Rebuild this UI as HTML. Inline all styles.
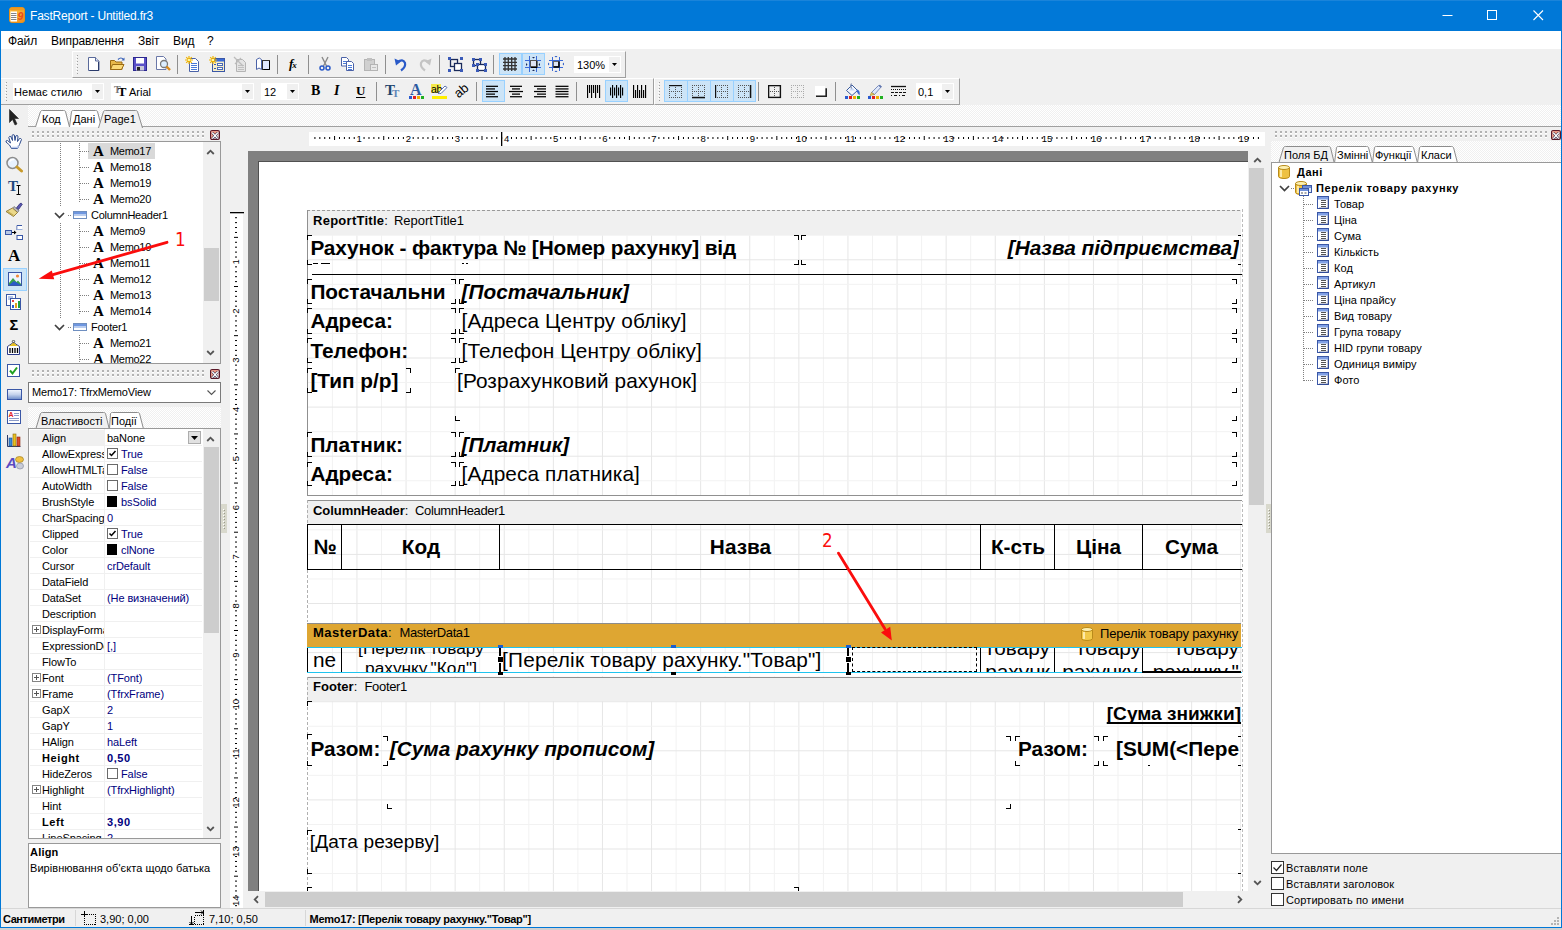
<!DOCTYPE html>
<html lang="uk"><head><meta charset="utf-8"><title>FastReport - Untitled.fr3</title>
<style>
html,body{margin:0;padding:0;}
body{width:1562px;height:930px;position:relative;overflow:hidden;background:#f0f0f0;font-family:"Liberation Sans",sans-serif;font-size:11px;color:#000;}
div,svg{position:absolute;box-sizing:border-box;}
.t{white-space:nowrap;font-size:11px;}
.b{font-weight:bold;letter-spacing:0.55px;}
.nv{color:#000080;}
.dot{background-image:linear-gradient(45deg,#fff 25%,transparent 25%,transparent 75%,#fff 75%),linear-gradient(45deg,#fff 25%,transparent 25%,transparent 75%,#fff 75%);background-size:2px 2px;background-position:0 0,1px 1px;background-color:#f0f0f0;}
.rt{white-space:nowrap;font-family:"Liberation Sans",sans-serif;color:#000;}
.act{background:#cce4f7;border:1px solid #99d1ff;}
.sep{width:1px;background:#a0a0a0;}
.combo{background:#fff;}
</style></head>
<body>
<div style="left:0px;top:0px;width:1562px;height:31px;background:#0078d7;"></div>
<div style="left:0px;top:0px;width:1562px;height:1px;background:#1a84da;"></div>
<div style="left:0px;top:31px;width:1px;height:897px;background:#0078d7;"></div>
<div style="left:1561px;top:31px;width:1px;height:897px;background:#0078d7;"></div>
<div style="left:0px;top:927px;width:1562px;height:1.4px;background:#0078d7;"></div>
<div style="left:0px;top:928.4px;width:1562px;height:1.6px;background:#d2d0d0;"></div>
<svg style="left:9px;top:7px;" width="16" height="16" viewBox="0 0 16 16"><defs><linearGradient id="ig" x1="0" y1="0" x2="1" y2="1"><stop offset="0" stop-color="#ffd24a"/><stop offset="1" stop-color="#f08a1a"/></linearGradient></defs>
<rect x="0.500" y="0.500" width="15" height="15" rx="2.500" fill="url(#ig)" stroke="#e8901a"/>
<rect x="1" y="1" width="14" height="2.500" rx="1.200" fill="#f09a20"/>
<rect x="1.500" y="4.500" width="6.500" height="10" fill="#fff"/>
<path d="M2 6.500h5.500M2 8.500h5.500M2 10.500h5.500M2 12.500h5.500" stroke="#777" stroke-width="0.900"/>
<text x="8.600" y="13" font-family="Liberation Sans" font-style="italic" font-weight="bold" font-size="10.500" fill="#ee4a1c">9</text></svg>
<div class="t" style="left:30px;top:7px;height:18px;line-height:18px;color:#fff;font-size:12px;letter-spacing:-0.2px;">FastReport - Untitled.fr3</div>
<svg style="left:1440px;top:8px;" width="110" height="16" viewBox="0 0 110 16"><path d="M2.5 7.5h10" stroke="#fff" stroke-width="1"/>
<rect x="47.5" y="2.5" width="9" height="9" fill="none" stroke="#fff" stroke-width="1"/>
<path d="M93.5 2.5l9.5 9.5M103 2.5l-9.5 9.5" stroke="#fff" stroke-width="1.1"/></svg>
<div style="left:1px;top:31px;width:1560px;height:18px;background:#fff;"></div>
<div class="t" style="left:8px;top:32px;height:19px;line-height:19px;font-size:12px;letter-spacing:-0.1px;">Файл</div>
<div class="t" style="left:51px;top:32px;height:19px;line-height:19px;font-size:12px;letter-spacing:-0.1px;">Виправлення</div>
<div class="t" style="left:138px;top:32px;height:19px;line-height:19px;font-size:12px;letter-spacing:-0.1px;">Звіт</div>
<div class="t" style="left:173px;top:32px;height:19px;line-height:19px;font-size:12px;letter-spacing:-0.1px;">Вид</div>
<div class="t" style="left:207px;top:32px;height:19px;line-height:19px;font-size:12px;letter-spacing:-0.1px;">?</div>
<div style="left:1px;top:49px;width:1560px;height:56px;background:#f0f0f0;"></div>
<div style="left:72px;top:51px;width:554px;height:27px;border-left:1px solid #fff;border-top:1px solid #fff;border-right:1px solid #a0a0a0;border-bottom:1px solid #a0a0a0;"></div>
<div style="left:1px;top:78px;width:653px;height:27px;border-top:1px solid #fff;border-right:1px solid #a0a0a0;border-bottom:1px solid #a0a0a0;"></div>
<div style="left:654px;top:78px;width:306px;height:27px;border-left:1px solid #fff;border-top:1px solid #fff;border-right:1px solid #a0a0a0;border-bottom:1px solid #a0a0a0;"></div>
<svg style="left:76px;top:55px;" width="3" height="19" viewBox="0 0 3 19"><rect x="1" y="0" width="1" height="1" fill="#a0a0a0"/><rect x="0" y="1" width="1" height="1" fill="#fff"/><rect x="1" y="3" width="1" height="1" fill="#a0a0a0"/><rect x="0" y="4" width="1" height="1" fill="#fff"/><rect x="1" y="6" width="1" height="1" fill="#a0a0a0"/><rect x="0" y="7" width="1" height="1" fill="#fff"/><rect x="1" y="9" width="1" height="1" fill="#a0a0a0"/><rect x="0" y="10" width="1" height="1" fill="#fff"/><rect x="1" y="12" width="1" height="1" fill="#a0a0a0"/><rect x="0" y="13" width="1" height="1" fill="#fff"/><rect x="1" y="15" width="1" height="1" fill="#a0a0a0"/><rect x="0" y="16" width="1" height="1" fill="#fff"/><rect x="1" y="18" width="1" height="1" fill="#a0a0a0"/><rect x="0" y="19" width="1" height="1" fill="#fff"/></svg>
<svg style="left:5px;top:82px;" width="3" height="19" viewBox="0 0 3 19"><rect x="1" y="0" width="1" height="1" fill="#a0a0a0"/><rect x="0" y="1" width="1" height="1" fill="#fff"/><rect x="1" y="3" width="1" height="1" fill="#a0a0a0"/><rect x="0" y="4" width="1" height="1" fill="#fff"/><rect x="1" y="6" width="1" height="1" fill="#a0a0a0"/><rect x="0" y="7" width="1" height="1" fill="#fff"/><rect x="1" y="9" width="1" height="1" fill="#a0a0a0"/><rect x="0" y="10" width="1" height="1" fill="#fff"/><rect x="1" y="12" width="1" height="1" fill="#a0a0a0"/><rect x="0" y="13" width="1" height="1" fill="#fff"/><rect x="1" y="15" width="1" height="1" fill="#a0a0a0"/><rect x="0" y="16" width="1" height="1" fill="#fff"/><rect x="1" y="18" width="1" height="1" fill="#a0a0a0"/><rect x="0" y="19" width="1" height="1" fill="#fff"/></svg>
<svg style="left:658px;top:82px;" width="3" height="19" viewBox="0 0 3 19"><rect x="1" y="0" width="1" height="1" fill="#a0a0a0"/><rect x="0" y="1" width="1" height="1" fill="#fff"/><rect x="1" y="3" width="1" height="1" fill="#a0a0a0"/><rect x="0" y="4" width="1" height="1" fill="#fff"/><rect x="1" y="6" width="1" height="1" fill="#a0a0a0"/><rect x="0" y="7" width="1" height="1" fill="#fff"/><rect x="1" y="9" width="1" height="1" fill="#a0a0a0"/><rect x="0" y="10" width="1" height="1" fill="#fff"/><rect x="1" y="12" width="1" height="1" fill="#a0a0a0"/><rect x="0" y="13" width="1" height="1" fill="#fff"/><rect x="1" y="15" width="1" height="1" fill="#a0a0a0"/><rect x="0" y="16" width="1" height="1" fill="#fff"/><rect x="1" y="18" width="1" height="1" fill="#a0a0a0"/><rect x="0" y="19" width="1" height="1" fill="#fff"/></svg>
<div class="dot" style="left:28px;top:105px;width:1533px;height:21px;"></div>
<div style="left:28px;top:126px;width:1533px;height:1px;background:#a0a0a0;"></div>
<div style="left:1px;top:908px;width:1560px;height:1px;background:#d7d7d7;"></div>
<div class="t" style="left:3px;top:910px;height:18px;line-height:18px;letter-spacing:-0.45px;font-weight:bold;font-size:11px;">Сантиметри</div>
<div class="t" style="left:100px;top:910px;height:18px;line-height:18px;">3,90; 0,00</div>
<div class="t" style="left:209px;top:910px;height:18px;line-height:18px;">7,10; 0,50</div>
<div class="t" style="left:309.5px;top:910px;height:18px;line-height:18px;letter-spacing:-0.27px;font-weight:bold;font-size:11px;">Memo17: [Перелік товару рахунку."Товар"]</div>
<div style="left:75px;top:910px;width:1px;height:16px;background:#d7d7d7;"></div>
<div style="left:305px;top:910px;width:1px;height:16px;background:#d7d7d7;"></div>
<svg style="left:81px;top:911px;" width="16" height="15" viewBox="0 0 16 15"><g shape-rendering="crispEdges"><path d="M0 3.500h6M3.500 0v6" stroke="#000" fill="none"/><rect x="3.500" y="3.500" width="11" height="10" fill="none" stroke="#000" stroke-dasharray="1 1"/></g></svg>
<svg style="left:189px;top:910px;" width="16" height="16" viewBox="0 0 16 16"><g shape-rendering="crispEdges"><rect x="5.500" y="5.500" width="9" height="9" fill="none" stroke="#000" stroke-dasharray="1 1"/><path d="M6 2.500h9M2.500 6v9M0 14.500h5M14.500 0v5" stroke="#000" fill="none"/></g><path d="M12 0.500l2 2-2 2M0.500 12l2 2 2-2" stroke="#000" fill="none"/></svg>
<svg style="left:1549px;top:915px;" width="12" height="12" viewBox="0 0 12 12"><rect x="8" y="2" width="2" height="2" fill="#b4b4b4"/><rect x="5" y="5" width="2" height="2" fill="#b4b4b4"/><rect x="8" y="5" width="2" height="2" fill="#b4b4b4"/><rect x="2" y="8" width="2" height="2" fill="#b4b4b4"/><rect x="5" y="8" width="2" height="2" fill="#b4b4b4"/><rect x="8" y="8" width="2" height="2" fill="#b4b4b4"/></svg>
<div style="left:1px;top:105px;width:27px;height:803px;background:#f0f0f0;"></div>
<svg style="left:34px;top:110px;" width="37" height="17" viewBox="0 0 37 17"><path d="M1.5 17L6.5 1.500Q7 0.500 8.5 0.500L29.5 0.500Q31 0.500 31.5 1.500L35.5 17" fill="#fff" stroke="#8c8c8c" stroke-width="1"/></svg>
<div class="t" style="left:42px;top:111px;height:17px;line-height:17px;letter-spacing:0px;">Код</div>
<svg style="left:68px;top:110px;" width="35" height="17" viewBox="0 0 35 17"><path d="M1.5 17L3.5 1.500Q4 0.500 5.5 0.500L27.5 0.500Q29 0.500 29.5 1.500L33.5 17" fill="#fff" stroke="#8c8c8c" stroke-width="1"/></svg>
<div class="t" style="left:73px;top:111px;height:17px;line-height:17px;letter-spacing:0px;">Дані</div>
<svg style="left:97px;top:110px;" width="47" height="18" viewBox="0 0 47 18"><path d="M1.5 18L6.5 1.500Q7 0.500 8.5 0.500L38.5 0.500Q40 0.500 40.5 1.500L45.5 18" fill="#f0f0f0" stroke="#8c8c8c" stroke-width="1"/></svg>
<div class="t" style="left:104px;top:111px;height:17px;line-height:17px;letter-spacing:0px;">Page1</div>
<svg style="left:31px;top:130px;" width="175" height="9" viewBox="0 0 175 9"><rect x="1" y="2.5" width="2" height="1.500" fill="#fff"/><rect x="1" y="1" width="2" height="2" fill="#b2b2b2"/><rect x="6" y="2.5" width="2" height="1.500" fill="#fff"/><rect x="6" y="1" width="2" height="2" fill="#b2b2b2"/><rect x="11" y="2.5" width="2" height="1.500" fill="#fff"/><rect x="11" y="1" width="2" height="2" fill="#b2b2b2"/><rect x="16" y="2.5" width="2" height="1.500" fill="#fff"/><rect x="16" y="1" width="2" height="2" fill="#b2b2b2"/><rect x="21" y="2.5" width="2" height="1.500" fill="#fff"/><rect x="21" y="1" width="2" height="2" fill="#b2b2b2"/><rect x="26" y="2.5" width="2" height="1.500" fill="#fff"/><rect x="26" y="1" width="2" height="2" fill="#b2b2b2"/><rect x="31" y="2.5" width="2" height="1.500" fill="#fff"/><rect x="31" y="1" width="2" height="2" fill="#b2b2b2"/><rect x="36" y="2.5" width="2" height="1.500" fill="#fff"/><rect x="36" y="1" width="2" height="2" fill="#b2b2b2"/><rect x="41" y="2.5" width="2" height="1.500" fill="#fff"/><rect x="41" y="1" width="2" height="2" fill="#b2b2b2"/><rect x="46" y="2.5" width="2" height="1.500" fill="#fff"/><rect x="46" y="1" width="2" height="2" fill="#b2b2b2"/><rect x="51" y="2.5" width="2" height="1.500" fill="#fff"/><rect x="51" y="1" width="2" height="2" fill="#b2b2b2"/><rect x="56" y="2.5" width="2" height="1.500" fill="#fff"/><rect x="56" y="1" width="2" height="2" fill="#b2b2b2"/><rect x="61" y="2.5" width="2" height="1.500" fill="#fff"/><rect x="61" y="1" width="2" height="2" fill="#b2b2b2"/><rect x="66" y="2.5" width="2" height="1.500" fill="#fff"/><rect x="66" y="1" width="2" height="2" fill="#b2b2b2"/><rect x="71" y="2.5" width="2" height="1.500" fill="#fff"/><rect x="71" y="1" width="2" height="2" fill="#b2b2b2"/><rect x="76" y="2.5" width="2" height="1.500" fill="#fff"/><rect x="76" y="1" width="2" height="2" fill="#b2b2b2"/><rect x="81" y="2.5" width="2" height="1.500" fill="#fff"/><rect x="81" y="1" width="2" height="2" fill="#b2b2b2"/><rect x="86" y="2.5" width="2" height="1.500" fill="#fff"/><rect x="86" y="1" width="2" height="2" fill="#b2b2b2"/><rect x="91" y="2.5" width="2" height="1.500" fill="#fff"/><rect x="91" y="1" width="2" height="2" fill="#b2b2b2"/><rect x="96" y="2.5" width="2" height="1.500" fill="#fff"/><rect x="96" y="1" width="2" height="2" fill="#b2b2b2"/><rect x="101" y="2.5" width="2" height="1.500" fill="#fff"/><rect x="101" y="1" width="2" height="2" fill="#b2b2b2"/><rect x="106" y="2.5" width="2" height="1.500" fill="#fff"/><rect x="106" y="1" width="2" height="2" fill="#b2b2b2"/><rect x="111" y="2.5" width="2" height="1.500" fill="#fff"/><rect x="111" y="1" width="2" height="2" fill="#b2b2b2"/><rect x="116" y="2.5" width="2" height="1.500" fill="#fff"/><rect x="116" y="1" width="2" height="2" fill="#b2b2b2"/><rect x="121" y="2.5" width="2" height="1.500" fill="#fff"/><rect x="121" y="1" width="2" height="2" fill="#b2b2b2"/><rect x="126" y="2.5" width="2" height="1.500" fill="#fff"/><rect x="126" y="1" width="2" height="2" fill="#b2b2b2"/><rect x="131" y="2.5" width="2" height="1.500" fill="#fff"/><rect x="131" y="1" width="2" height="2" fill="#b2b2b2"/><rect x="136" y="2.5" width="2" height="1.500" fill="#fff"/><rect x="136" y="1" width="2" height="2" fill="#b2b2b2"/><rect x="141" y="2.5" width="2" height="1.500" fill="#fff"/><rect x="141" y="1" width="2" height="2" fill="#b2b2b2"/><rect x="146" y="2.5" width="2" height="1.500" fill="#fff"/><rect x="146" y="1" width="2" height="2" fill="#b2b2b2"/><rect x="151" y="2.5" width="2" height="1.500" fill="#fff"/><rect x="151" y="1" width="2" height="2" fill="#b2b2b2"/><rect x="156" y="2.5" width="2" height="1.500" fill="#fff"/><rect x="156" y="1" width="2" height="2" fill="#b2b2b2"/><rect x="161" y="2.5" width="2" height="1.500" fill="#fff"/><rect x="161" y="1" width="2" height="2" fill="#b2b2b2"/><rect x="166" y="2.5" width="2" height="1.500" fill="#fff"/><rect x="166" y="1" width="2" height="2" fill="#b2b2b2"/><rect x="171" y="2.5" width="2" height="1.500" fill="#fff"/><rect x="171" y="1" width="2" height="2" fill="#b2b2b2"/><rect x="1" y="6.5" width="2" height="1.500" fill="#fff"/><rect x="1" y="5" width="2" height="2" fill="#b2b2b2"/><rect x="6" y="6.5" width="2" height="1.500" fill="#fff"/><rect x="6" y="5" width="2" height="2" fill="#b2b2b2"/><rect x="11" y="6.5" width="2" height="1.500" fill="#fff"/><rect x="11" y="5" width="2" height="2" fill="#b2b2b2"/><rect x="16" y="6.5" width="2" height="1.500" fill="#fff"/><rect x="16" y="5" width="2" height="2" fill="#b2b2b2"/><rect x="21" y="6.5" width="2" height="1.500" fill="#fff"/><rect x="21" y="5" width="2" height="2" fill="#b2b2b2"/><rect x="26" y="6.5" width="2" height="1.500" fill="#fff"/><rect x="26" y="5" width="2" height="2" fill="#b2b2b2"/><rect x="31" y="6.5" width="2" height="1.500" fill="#fff"/><rect x="31" y="5" width="2" height="2" fill="#b2b2b2"/><rect x="36" y="6.5" width="2" height="1.500" fill="#fff"/><rect x="36" y="5" width="2" height="2" fill="#b2b2b2"/><rect x="41" y="6.5" width="2" height="1.500" fill="#fff"/><rect x="41" y="5" width="2" height="2" fill="#b2b2b2"/><rect x="46" y="6.5" width="2" height="1.500" fill="#fff"/><rect x="46" y="5" width="2" height="2" fill="#b2b2b2"/><rect x="51" y="6.5" width="2" height="1.500" fill="#fff"/><rect x="51" y="5" width="2" height="2" fill="#b2b2b2"/><rect x="56" y="6.5" width="2" height="1.500" fill="#fff"/><rect x="56" y="5" width="2" height="2" fill="#b2b2b2"/><rect x="61" y="6.5" width="2" height="1.500" fill="#fff"/><rect x="61" y="5" width="2" height="2" fill="#b2b2b2"/><rect x="66" y="6.5" width="2" height="1.500" fill="#fff"/><rect x="66" y="5" width="2" height="2" fill="#b2b2b2"/><rect x="71" y="6.5" width="2" height="1.500" fill="#fff"/><rect x="71" y="5" width="2" height="2" fill="#b2b2b2"/><rect x="76" y="6.5" width="2" height="1.500" fill="#fff"/><rect x="76" y="5" width="2" height="2" fill="#b2b2b2"/><rect x="81" y="6.5" width="2" height="1.500" fill="#fff"/><rect x="81" y="5" width="2" height="2" fill="#b2b2b2"/><rect x="86" y="6.5" width="2" height="1.500" fill="#fff"/><rect x="86" y="5" width="2" height="2" fill="#b2b2b2"/><rect x="91" y="6.5" width="2" height="1.500" fill="#fff"/><rect x="91" y="5" width="2" height="2" fill="#b2b2b2"/><rect x="96" y="6.5" width="2" height="1.500" fill="#fff"/><rect x="96" y="5" width="2" height="2" fill="#b2b2b2"/><rect x="101" y="6.5" width="2" height="1.500" fill="#fff"/><rect x="101" y="5" width="2" height="2" fill="#b2b2b2"/><rect x="106" y="6.5" width="2" height="1.500" fill="#fff"/><rect x="106" y="5" width="2" height="2" fill="#b2b2b2"/><rect x="111" y="6.5" width="2" height="1.500" fill="#fff"/><rect x="111" y="5" width="2" height="2" fill="#b2b2b2"/><rect x="116" y="6.5" width="2" height="1.500" fill="#fff"/><rect x="116" y="5" width="2" height="2" fill="#b2b2b2"/><rect x="121" y="6.5" width="2" height="1.500" fill="#fff"/><rect x="121" y="5" width="2" height="2" fill="#b2b2b2"/><rect x="126" y="6.5" width="2" height="1.500" fill="#fff"/><rect x="126" y="5" width="2" height="2" fill="#b2b2b2"/><rect x="131" y="6.5" width="2" height="1.500" fill="#fff"/><rect x="131" y="5" width="2" height="2" fill="#b2b2b2"/><rect x="136" y="6.5" width="2" height="1.500" fill="#fff"/><rect x="136" y="5" width="2" height="2" fill="#b2b2b2"/><rect x="141" y="6.5" width="2" height="1.500" fill="#fff"/><rect x="141" y="5" width="2" height="2" fill="#b2b2b2"/><rect x="146" y="6.5" width="2" height="1.500" fill="#fff"/><rect x="146" y="5" width="2" height="2" fill="#b2b2b2"/><rect x="151" y="6.5" width="2" height="1.500" fill="#fff"/><rect x="151" y="5" width="2" height="2" fill="#b2b2b2"/><rect x="156" y="6.5" width="2" height="1.500" fill="#fff"/><rect x="156" y="5" width="2" height="2" fill="#b2b2b2"/><rect x="161" y="6.5" width="2" height="1.500" fill="#fff"/><rect x="161" y="5" width="2" height="2" fill="#b2b2b2"/><rect x="166" y="6.5" width="2" height="1.500" fill="#fff"/><rect x="166" y="5" width="2" height="2" fill="#b2b2b2"/><rect x="171" y="6.5" width="2" height="1.500" fill="#fff"/><rect x="171" y="5" width="2" height="2" fill="#b2b2b2"/></svg>
<svg style="left:210px;top:129.5px;" width="10" height="10" viewBox="0 0 11 11"><rect x="0.700" y="0.700" width="9.600" height="9.600" rx="1.500" fill="#f6ded8" stroke="#5a1828" stroke-width="1.400"/><path d="M1.500 1.500h8l-4 4z" fill="#f0937c"/><path d="M1.500 1.500v8l4-4z" fill="#f0937c"/><path d="M2.500 3l6 6.500M8.500 3l-6 6.500" stroke="#2a2a4a" stroke-width="2.600"/><path d="M2.500 3l6 6.500M8.500 3l-6 6.500" stroke="#fff" stroke-width="1.500"/></svg>
<div style="left:28px;top:141px;width:193px;height:223px;background:#fff;border:1px solid #999;overflow:hidden;"></div>
<div style="left:60px;top:143px;width:1px;height:184px;background-image:linear-gradient(180deg,#808080 50%,transparent 50%);background-size:1px 2px;"></div>
<div style="left:79px;top:143px;width:1px;height:60px;background-image:linear-gradient(180deg,#808080 50%,transparent 50%);background-size:1px 2px;"></div>
<div style="left:79px;top:223px;width:1px;height:92px;background-image:linear-gradient(180deg,#808080 50%,transparent 50%);background-size:1px 2px;"></div>
<div style="left:79px;top:335px;width:1px;height:28px;background-image:linear-gradient(180deg,#808080 50%,transparent 50%);background-size:1px 2px;"></div>
<div style="left:88px;top:143px;width:67px;height:16px;background:#d9d9d9;"></div>
<div style="left:80px;top:151px;width:9px;height:1px;background-image:linear-gradient(90deg,#808080 50%,transparent 50%);background-size:2px 1px;"></div>
<div style="left:30px;top:143px;width:172px;height:16px;overflow:hidden;">
<div class="t" style="left:63px;top:0;height:16px;line-height:16px;font-family:'Liberation Serif',serif;font-weight:bold;font-size:15px;">A</div>
<div class="t" style="left:80px;top:0;height:16px;line-height:16px;letter-spacing:-0.3px;">Memo17</div></div>
<div style="left:80px;top:167px;width:9px;height:1px;background-image:linear-gradient(90deg,#808080 50%,transparent 50%);background-size:2px 1px;"></div>
<div style="left:30px;top:159px;width:172px;height:16px;overflow:hidden;">
<div class="t" style="left:63px;top:0;height:16px;line-height:16px;font-family:'Liberation Serif',serif;font-weight:bold;font-size:15px;">A</div>
<div class="t" style="left:80px;top:0;height:16px;line-height:16px;letter-spacing:-0.3px;">Memo18</div></div>
<div style="left:80px;top:183px;width:9px;height:1px;background-image:linear-gradient(90deg,#808080 50%,transparent 50%);background-size:2px 1px;"></div>
<div style="left:30px;top:175px;width:172px;height:16px;overflow:hidden;">
<div class="t" style="left:63px;top:0;height:16px;line-height:16px;font-family:'Liberation Serif',serif;font-weight:bold;font-size:15px;">A</div>
<div class="t" style="left:80px;top:0;height:16px;line-height:16px;letter-spacing:-0.3px;">Memo19</div></div>
<div style="left:80px;top:199px;width:9px;height:1px;background-image:linear-gradient(90deg,#808080 50%,transparent 50%);background-size:2px 1px;"></div>
<div style="left:30px;top:191px;width:172px;height:16px;overflow:hidden;">
<div class="t" style="left:63px;top:0;height:16px;line-height:16px;font-family:'Liberation Serif',serif;font-weight:bold;font-size:15px;">A</div>
<div class="t" style="left:80px;top:0;height:16px;line-height:16px;letter-spacing:-0.3px;">Memo20</div></div>
<div style="left:50px;top:207px;width:20px;height:16px;background:#fff;"></div>
<svg style="left:54px;top:212px;" width="11" height="7" viewBox="0 0 11 7"><path d="M1 1L5.500 5.500L10 1" fill="none" stroke="#404040" stroke-width="1.700"/></svg>
<div style="left:68px;top:215px;width:4px;height:1px;background-image:linear-gradient(90deg,#808080 50%,transparent 50%);background-size:2px 1px;"></div>
<svg style="left:73px;top:211px;" width="14" height="8" viewBox="0 0 14 8"><rect x="0.500" y="0.500" width="13" height="7" fill="#fff" stroke="#6f8fc0"/><rect x="1" y="1" width="12" height="2.500" fill="#6f97e0"/><rect x="1" y="3.500" width="12" height="1.500" fill="#b9cdf0"/></svg>
<div class="t" style="left:91px;top:207px;height:16px;line-height:16px;letter-spacing:-0.25px;">ColumnHeader1</div>
<div style="left:80px;top:231px;width:9px;height:1px;background-image:linear-gradient(90deg,#808080 50%,transparent 50%);background-size:2px 1px;"></div>
<div style="left:30px;top:223px;width:172px;height:16px;overflow:hidden;">
<div class="t" style="left:63px;top:0;height:16px;line-height:16px;font-family:'Liberation Serif',serif;font-weight:bold;font-size:15px;">A</div>
<div class="t" style="left:80px;top:0;height:16px;line-height:16px;letter-spacing:-0.3px;">Memo9</div></div>
<div style="left:80px;top:247px;width:9px;height:1px;background-image:linear-gradient(90deg,#808080 50%,transparent 50%);background-size:2px 1px;"></div>
<div style="left:30px;top:239px;width:172px;height:16px;overflow:hidden;">
<div class="t" style="left:63px;top:0;height:16px;line-height:16px;font-family:'Liberation Serif',serif;font-weight:bold;font-size:15px;">A</div>
<div class="t" style="left:80px;top:0;height:16px;line-height:16px;letter-spacing:-0.3px;">Memo10</div></div>
<div style="left:80px;top:263px;width:9px;height:1px;background-image:linear-gradient(90deg,#808080 50%,transparent 50%);background-size:2px 1px;"></div>
<div style="left:30px;top:255px;width:172px;height:16px;overflow:hidden;">
<div class="t" style="left:63px;top:0;height:16px;line-height:16px;font-family:'Liberation Serif',serif;font-weight:bold;font-size:15px;">A</div>
<div class="t" style="left:80px;top:0;height:16px;line-height:16px;letter-spacing:-0.3px;">Memo11</div></div>
<div style="left:80px;top:279px;width:9px;height:1px;background-image:linear-gradient(90deg,#808080 50%,transparent 50%);background-size:2px 1px;"></div>
<div style="left:30px;top:271px;width:172px;height:16px;overflow:hidden;">
<div class="t" style="left:63px;top:0;height:16px;line-height:16px;font-family:'Liberation Serif',serif;font-weight:bold;font-size:15px;">A</div>
<div class="t" style="left:80px;top:0;height:16px;line-height:16px;letter-spacing:-0.3px;">Memo12</div></div>
<div style="left:80px;top:295px;width:9px;height:1px;background-image:linear-gradient(90deg,#808080 50%,transparent 50%);background-size:2px 1px;"></div>
<div style="left:30px;top:287px;width:172px;height:16px;overflow:hidden;">
<div class="t" style="left:63px;top:0;height:16px;line-height:16px;font-family:'Liberation Serif',serif;font-weight:bold;font-size:15px;">A</div>
<div class="t" style="left:80px;top:0;height:16px;line-height:16px;letter-spacing:-0.3px;">Memo13</div></div>
<div style="left:80px;top:311px;width:9px;height:1px;background-image:linear-gradient(90deg,#808080 50%,transparent 50%);background-size:2px 1px;"></div>
<div style="left:30px;top:303px;width:172px;height:16px;overflow:hidden;">
<div class="t" style="left:63px;top:0;height:16px;line-height:16px;font-family:'Liberation Serif',serif;font-weight:bold;font-size:15px;">A</div>
<div class="t" style="left:80px;top:0;height:16px;line-height:16px;letter-spacing:-0.3px;">Memo14</div></div>
<div style="left:50px;top:319px;width:20px;height:16px;background:#fff;"></div>
<svg style="left:54px;top:324px;" width="11" height="7" viewBox="0 0 11 7"><path d="M1 1L5.500 5.500L10 1" fill="none" stroke="#404040" stroke-width="1.700"/></svg>
<div style="left:68px;top:327px;width:4px;height:1px;background-image:linear-gradient(90deg,#808080 50%,transparent 50%);background-size:2px 1px;"></div>
<svg style="left:73px;top:323px;" width="14" height="8" viewBox="0 0 14 8"><rect x="0.500" y="0.500" width="13" height="7" fill="#fff" stroke="#6f8fc0"/><rect x="1" y="1" width="12" height="2.500" fill="#6f97e0"/><rect x="1" y="3.500" width="12" height="1.500" fill="#b9cdf0"/></svg>
<div class="t" style="left:91px;top:319px;height:16px;line-height:16px;letter-spacing:-0.25px;">Footer1</div>
<div style="left:80px;top:343px;width:9px;height:1px;background-image:linear-gradient(90deg,#808080 50%,transparent 50%);background-size:2px 1px;"></div>
<div style="left:30px;top:335px;width:172px;height:16px;overflow:hidden;">
<div class="t" style="left:63px;top:0;height:16px;line-height:16px;font-family:'Liberation Serif',serif;font-weight:bold;font-size:15px;">A</div>
<div class="t" style="left:80px;top:0;height:16px;line-height:16px;letter-spacing:-0.3px;">Memo21</div></div>
<div style="left:80px;top:359px;width:9px;height:1px;background-image:linear-gradient(90deg,#808080 50%,transparent 50%);background-size:2px 1px;"></div>
<div style="left:30px;top:351px;width:172px;height:12px;overflow:hidden;">
<div class="t" style="left:63px;top:0;height:16px;line-height:16px;font-family:'Liberation Serif',serif;font-weight:bold;font-size:15px;">A</div>
<div class="t" style="left:80px;top:0;height:16px;line-height:16px;letter-spacing:-0.3px;">Memo22</div></div>
<div style="left:203px;top:142px;width:17px;height:221px;background:#f0f0f0;"></div>
<svg style="left:206px;top:149px;" width="9" height="6" viewBox="0 0 9 6"><path d="M1.200 5L4.500 1.700L7.800 5" fill="none" stroke="#555" stroke-width="1.800"/></svg>
<svg style="left:206px;top:350px;" width="9" height="6" viewBox="0 0 9 6"><path d="M1.200 1L4.500 4.300L7.800 1" fill="none" stroke="#555" stroke-width="1.800"/></svg>
<div style="left:204px;top:248px;width:15px;height:53px;background:#cdcdcd;"></div>
<svg style="left:31px;top:369px;" width="175" height="9" viewBox="0 0 175 9"><rect x="1" y="2.5" width="2" height="1.500" fill="#fff"/><rect x="1" y="1" width="2" height="2" fill="#b2b2b2"/><rect x="6" y="2.5" width="2" height="1.500" fill="#fff"/><rect x="6" y="1" width="2" height="2" fill="#b2b2b2"/><rect x="11" y="2.5" width="2" height="1.500" fill="#fff"/><rect x="11" y="1" width="2" height="2" fill="#b2b2b2"/><rect x="16" y="2.5" width="2" height="1.500" fill="#fff"/><rect x="16" y="1" width="2" height="2" fill="#b2b2b2"/><rect x="21" y="2.5" width="2" height="1.500" fill="#fff"/><rect x="21" y="1" width="2" height="2" fill="#b2b2b2"/><rect x="26" y="2.5" width="2" height="1.500" fill="#fff"/><rect x="26" y="1" width="2" height="2" fill="#b2b2b2"/><rect x="31" y="2.5" width="2" height="1.500" fill="#fff"/><rect x="31" y="1" width="2" height="2" fill="#b2b2b2"/><rect x="36" y="2.5" width="2" height="1.500" fill="#fff"/><rect x="36" y="1" width="2" height="2" fill="#b2b2b2"/><rect x="41" y="2.5" width="2" height="1.500" fill="#fff"/><rect x="41" y="1" width="2" height="2" fill="#b2b2b2"/><rect x="46" y="2.5" width="2" height="1.500" fill="#fff"/><rect x="46" y="1" width="2" height="2" fill="#b2b2b2"/><rect x="51" y="2.5" width="2" height="1.500" fill="#fff"/><rect x="51" y="1" width="2" height="2" fill="#b2b2b2"/><rect x="56" y="2.5" width="2" height="1.500" fill="#fff"/><rect x="56" y="1" width="2" height="2" fill="#b2b2b2"/><rect x="61" y="2.5" width="2" height="1.500" fill="#fff"/><rect x="61" y="1" width="2" height="2" fill="#b2b2b2"/><rect x="66" y="2.5" width="2" height="1.500" fill="#fff"/><rect x="66" y="1" width="2" height="2" fill="#b2b2b2"/><rect x="71" y="2.5" width="2" height="1.500" fill="#fff"/><rect x="71" y="1" width="2" height="2" fill="#b2b2b2"/><rect x="76" y="2.5" width="2" height="1.500" fill="#fff"/><rect x="76" y="1" width="2" height="2" fill="#b2b2b2"/><rect x="81" y="2.5" width="2" height="1.500" fill="#fff"/><rect x="81" y="1" width="2" height="2" fill="#b2b2b2"/><rect x="86" y="2.5" width="2" height="1.500" fill="#fff"/><rect x="86" y="1" width="2" height="2" fill="#b2b2b2"/><rect x="91" y="2.5" width="2" height="1.500" fill="#fff"/><rect x="91" y="1" width="2" height="2" fill="#b2b2b2"/><rect x="96" y="2.5" width="2" height="1.500" fill="#fff"/><rect x="96" y="1" width="2" height="2" fill="#b2b2b2"/><rect x="101" y="2.5" width="2" height="1.500" fill="#fff"/><rect x="101" y="1" width="2" height="2" fill="#b2b2b2"/><rect x="106" y="2.5" width="2" height="1.500" fill="#fff"/><rect x="106" y="1" width="2" height="2" fill="#b2b2b2"/><rect x="111" y="2.5" width="2" height="1.500" fill="#fff"/><rect x="111" y="1" width="2" height="2" fill="#b2b2b2"/><rect x="116" y="2.5" width="2" height="1.500" fill="#fff"/><rect x="116" y="1" width="2" height="2" fill="#b2b2b2"/><rect x="121" y="2.5" width="2" height="1.500" fill="#fff"/><rect x="121" y="1" width="2" height="2" fill="#b2b2b2"/><rect x="126" y="2.5" width="2" height="1.500" fill="#fff"/><rect x="126" y="1" width="2" height="2" fill="#b2b2b2"/><rect x="131" y="2.5" width="2" height="1.500" fill="#fff"/><rect x="131" y="1" width="2" height="2" fill="#b2b2b2"/><rect x="136" y="2.5" width="2" height="1.500" fill="#fff"/><rect x="136" y="1" width="2" height="2" fill="#b2b2b2"/><rect x="141" y="2.5" width="2" height="1.500" fill="#fff"/><rect x="141" y="1" width="2" height="2" fill="#b2b2b2"/><rect x="146" y="2.5" width="2" height="1.500" fill="#fff"/><rect x="146" y="1" width="2" height="2" fill="#b2b2b2"/><rect x="151" y="2.5" width="2" height="1.500" fill="#fff"/><rect x="151" y="1" width="2" height="2" fill="#b2b2b2"/><rect x="156" y="2.5" width="2" height="1.500" fill="#fff"/><rect x="156" y="1" width="2" height="2" fill="#b2b2b2"/><rect x="161" y="2.5" width="2" height="1.500" fill="#fff"/><rect x="161" y="1" width="2" height="2" fill="#b2b2b2"/><rect x="166" y="2.5" width="2" height="1.500" fill="#fff"/><rect x="166" y="1" width="2" height="2" fill="#b2b2b2"/><rect x="171" y="2.5" width="2" height="1.500" fill="#fff"/><rect x="171" y="1" width="2" height="2" fill="#b2b2b2"/><rect x="1" y="6.5" width="2" height="1.500" fill="#fff"/><rect x="1" y="5" width="2" height="2" fill="#b2b2b2"/><rect x="6" y="6.5" width="2" height="1.500" fill="#fff"/><rect x="6" y="5" width="2" height="2" fill="#b2b2b2"/><rect x="11" y="6.5" width="2" height="1.500" fill="#fff"/><rect x="11" y="5" width="2" height="2" fill="#b2b2b2"/><rect x="16" y="6.5" width="2" height="1.500" fill="#fff"/><rect x="16" y="5" width="2" height="2" fill="#b2b2b2"/><rect x="21" y="6.5" width="2" height="1.500" fill="#fff"/><rect x="21" y="5" width="2" height="2" fill="#b2b2b2"/><rect x="26" y="6.5" width="2" height="1.500" fill="#fff"/><rect x="26" y="5" width="2" height="2" fill="#b2b2b2"/><rect x="31" y="6.5" width="2" height="1.500" fill="#fff"/><rect x="31" y="5" width="2" height="2" fill="#b2b2b2"/><rect x="36" y="6.5" width="2" height="1.500" fill="#fff"/><rect x="36" y="5" width="2" height="2" fill="#b2b2b2"/><rect x="41" y="6.5" width="2" height="1.500" fill="#fff"/><rect x="41" y="5" width="2" height="2" fill="#b2b2b2"/><rect x="46" y="6.5" width="2" height="1.500" fill="#fff"/><rect x="46" y="5" width="2" height="2" fill="#b2b2b2"/><rect x="51" y="6.5" width="2" height="1.500" fill="#fff"/><rect x="51" y="5" width="2" height="2" fill="#b2b2b2"/><rect x="56" y="6.5" width="2" height="1.500" fill="#fff"/><rect x="56" y="5" width="2" height="2" fill="#b2b2b2"/><rect x="61" y="6.5" width="2" height="1.500" fill="#fff"/><rect x="61" y="5" width="2" height="2" fill="#b2b2b2"/><rect x="66" y="6.5" width="2" height="1.500" fill="#fff"/><rect x="66" y="5" width="2" height="2" fill="#b2b2b2"/><rect x="71" y="6.5" width="2" height="1.500" fill="#fff"/><rect x="71" y="5" width="2" height="2" fill="#b2b2b2"/><rect x="76" y="6.5" width="2" height="1.500" fill="#fff"/><rect x="76" y="5" width="2" height="2" fill="#b2b2b2"/><rect x="81" y="6.5" width="2" height="1.500" fill="#fff"/><rect x="81" y="5" width="2" height="2" fill="#b2b2b2"/><rect x="86" y="6.5" width="2" height="1.500" fill="#fff"/><rect x="86" y="5" width="2" height="2" fill="#b2b2b2"/><rect x="91" y="6.5" width="2" height="1.500" fill="#fff"/><rect x="91" y="5" width="2" height="2" fill="#b2b2b2"/><rect x="96" y="6.5" width="2" height="1.500" fill="#fff"/><rect x="96" y="5" width="2" height="2" fill="#b2b2b2"/><rect x="101" y="6.5" width="2" height="1.500" fill="#fff"/><rect x="101" y="5" width="2" height="2" fill="#b2b2b2"/><rect x="106" y="6.5" width="2" height="1.500" fill="#fff"/><rect x="106" y="5" width="2" height="2" fill="#b2b2b2"/><rect x="111" y="6.5" width="2" height="1.500" fill="#fff"/><rect x="111" y="5" width="2" height="2" fill="#b2b2b2"/><rect x="116" y="6.5" width="2" height="1.500" fill="#fff"/><rect x="116" y="5" width="2" height="2" fill="#b2b2b2"/><rect x="121" y="6.5" width="2" height="1.500" fill="#fff"/><rect x="121" y="5" width="2" height="2" fill="#b2b2b2"/><rect x="126" y="6.5" width="2" height="1.500" fill="#fff"/><rect x="126" y="5" width="2" height="2" fill="#b2b2b2"/><rect x="131" y="6.5" width="2" height="1.500" fill="#fff"/><rect x="131" y="5" width="2" height="2" fill="#b2b2b2"/><rect x="136" y="6.5" width="2" height="1.500" fill="#fff"/><rect x="136" y="5" width="2" height="2" fill="#b2b2b2"/><rect x="141" y="6.5" width="2" height="1.500" fill="#fff"/><rect x="141" y="5" width="2" height="2" fill="#b2b2b2"/><rect x="146" y="6.5" width="2" height="1.500" fill="#fff"/><rect x="146" y="5" width="2" height="2" fill="#b2b2b2"/><rect x="151" y="6.5" width="2" height="1.500" fill="#fff"/><rect x="151" y="5" width="2" height="2" fill="#b2b2b2"/><rect x="156" y="6.5" width="2" height="1.500" fill="#fff"/><rect x="156" y="5" width="2" height="2" fill="#b2b2b2"/><rect x="161" y="6.5" width="2" height="1.500" fill="#fff"/><rect x="161" y="5" width="2" height="2" fill="#b2b2b2"/><rect x="166" y="6.5" width="2" height="1.500" fill="#fff"/><rect x="166" y="5" width="2" height="2" fill="#b2b2b2"/><rect x="171" y="6.5" width="2" height="1.500" fill="#fff"/><rect x="171" y="5" width="2" height="2" fill="#b2b2b2"/></svg>
<svg style="left:210px;top:369px;" width="10" height="10" viewBox="0 0 11 11"><rect x="0.700" y="0.700" width="9.600" height="9.600" rx="1.500" fill="#f6ded8" stroke="#5a1828" stroke-width="1.400"/><path d="M1.500 1.500h8l-4 4z" fill="#f0937c"/><path d="M1.500 1.500v8l4-4z" fill="#f0937c"/><path d="M2.500 3l6 6.500M8.500 3l-6 6.500" stroke="#2a2a4a" stroke-width="2.600"/><path d="M2.500 3l6 6.500M8.500 3l-6 6.500" stroke="#fff" stroke-width="1.500"/></svg>
<div style="left:28px;top:382px;width:193px;height:21px;background:#fff;border:1px solid #7a7a7a;"></div>
<div class="t" style="left:32px;top:384px;height:17px;line-height:17px;letter-spacing:-0.15px;">Memo17: TfrxMemoView</div>
<svg style="left:207px;top:390px;" width="10" height="6" viewBox="0 0 10 6"><path d="M0.500 0.500L4.500 4.500L8.500 0.500" fill="none" stroke="#555" stroke-width="1.100"/></svg>
<div class="dot" style="left:28px;top:407px;width:193px;height:22px;"></div>
<svg style="left:34px;top:412px;" width="77" height="18" viewBox="0 0 77 18"><path d="M1.5 18L6.5 1.500Q7 0.500 8.5 0.500L69.5 0.500Q71 0.500 71.5 1.500L75.5 18" fill="#f0f0f0" stroke="#8c8c8c" stroke-width="1"/></svg>
<div class="t" style="left:41px;top:413px;height:17px;line-height:17px;letter-spacing:0px;">Властивості</div>
<svg style="left:108px;top:412px;" width="37" height="17" viewBox="0 0 37 17"><path d="M1.5 17L2.5 1.500Q3 0.500 4.5 0.500L29.5 0.500Q31 0.500 31.5 1.500L35.5 17" fill="#fff" stroke="#8c8c8c" stroke-width="1"/></svg>
<div class="t" style="left:111px;top:413px;height:17px;line-height:17px;letter-spacing:0px;">Події</div>
<div style="left:28px;top:428px;width:193px;height:411px;background:#fff;border:1px solid #999;"></div>
<div style="left:30px;top:429px;width:172px;height:409px;overflow:hidden;">
<div style="left:0px;top:1px;width:74px;height:16px;background:#f0f0f0;"></div>
<div style="left:0px;top:16px;width:172px;height:1px;background:#f0f0f0;"></div>
<div style="left:0;top:1px;width:74px;height:15px;overflow:hidden;"><div class="t" style="left:12px;top:0;height:15px;line-height:17px;letter-spacing:-0.1px;">Align</div></div>
<div class="t" style="left:77px;top:1px;height:15px;line-height:17px;color:#000;letter-spacing:-0.1px;">baNone</div>
<div style="left:0px;top:32px;width:172px;height:1px;background:#f0f0f0;"></div>
<div style="left:0;top:17px;width:74px;height:15px;overflow:hidden;"><div class="t" style="left:12px;top:0;height:15px;line-height:17px;letter-spacing:-0.1px;">AllowExpress</div></div>
<svg style="left:77px;top:19px;" width="11" height="11" viewBox="0 0 11 11"><rect x="0.500" y="0.500" width="10" height="10" fill="#fff" stroke="#6a6a6a"/><path d="M2.5 5.5l2 2 4-4.5" fill="none" stroke="#000" stroke-width="1.5"/></svg>
<div class="t" style="left:91px;top:17px;height:15px;line-height:17px;color:#000080;letter-spacing:-0.1px;">True</div>
<div style="left:0px;top:48px;width:172px;height:1px;background:#f0f0f0;"></div>
<div style="left:0;top:33px;width:74px;height:15px;overflow:hidden;"><div class="t" style="left:12px;top:0;height:15px;line-height:17px;letter-spacing:-0.1px;">AllowHTMLTa</div></div>
<svg style="left:77px;top:35px;" width="11" height="11" viewBox="0 0 11 11"><rect x="0.500" y="0.500" width="10" height="10" fill="#fff" stroke="#6a6a6a"/></svg>
<div class="t" style="left:91px;top:33px;height:15px;line-height:17px;color:#000080;letter-spacing:-0.1px;">False</div>
<div style="left:0px;top:64px;width:172px;height:1px;background:#f0f0f0;"></div>
<div style="left:0;top:49px;width:74px;height:15px;overflow:hidden;"><div class="t" style="left:12px;top:0;height:15px;line-height:17px;letter-spacing:-0.1px;">AutoWidth</div></div>
<svg style="left:77px;top:51px;" width="11" height="11" viewBox="0 0 11 11"><rect x="0.500" y="0.500" width="10" height="10" fill="#fff" stroke="#6a6a6a"/></svg>
<div class="t" style="left:91px;top:49px;height:15px;line-height:17px;color:#000080;letter-spacing:-0.1px;">False</div>
<div style="left:0px;top:80px;width:172px;height:1px;background:#f0f0f0;"></div>
<div style="left:0;top:65px;width:74px;height:15px;overflow:hidden;"><div class="t" style="left:12px;top:0;height:15px;line-height:17px;letter-spacing:-0.1px;">BrushStyle</div></div>
<div style="left:77px;top:67px;width:10px;height:11px;background:#000;"></div>
<div class="t" style="left:91px;top:65px;height:15px;line-height:17px;color:#000080;letter-spacing:-0.1px;">bsSolid</div>
<div style="left:0px;top:96px;width:172px;height:1px;background:#f0f0f0;"></div>
<div style="left:0;top:81px;width:74px;height:15px;overflow:hidden;"><div class="t" style="left:12px;top:0;height:15px;line-height:17px;letter-spacing:-0.1px;">CharSpacing</div></div>
<div class="t" style="left:77px;top:81px;height:15px;line-height:17px;color:#000080;letter-spacing:-0.1px;">0</div>
<div style="left:0px;top:112px;width:172px;height:1px;background:#f0f0f0;"></div>
<div style="left:0;top:97px;width:74px;height:15px;overflow:hidden;"><div class="t" style="left:12px;top:0;height:15px;line-height:17px;letter-spacing:-0.1px;">Clipped</div></div>
<svg style="left:77px;top:99px;" width="11" height="11" viewBox="0 0 11 11"><rect x="0.500" y="0.500" width="10" height="10" fill="#fff" stroke="#6a6a6a"/><path d="M2.5 5.5l2 2 4-4.5" fill="none" stroke="#000" stroke-width="1.5"/></svg>
<div class="t" style="left:91px;top:97px;height:15px;line-height:17px;color:#000080;letter-spacing:-0.1px;">True</div>
<div style="left:0px;top:128px;width:172px;height:1px;background:#f0f0f0;"></div>
<div style="left:0;top:113px;width:74px;height:15px;overflow:hidden;"><div class="t" style="left:12px;top:0;height:15px;line-height:17px;letter-spacing:-0.1px;">Color</div></div>
<div style="left:77px;top:115px;width:10px;height:11px;background:#000;"></div>
<div class="t" style="left:91px;top:113px;height:15px;line-height:17px;color:#000080;letter-spacing:-0.1px;">clNone</div>
<div style="left:0px;top:144px;width:172px;height:1px;background:#f0f0f0;"></div>
<div style="left:0;top:129px;width:74px;height:15px;overflow:hidden;"><div class="t" style="left:12px;top:0;height:15px;line-height:17px;letter-spacing:-0.1px;">Cursor</div></div>
<div class="t" style="left:77px;top:129px;height:15px;line-height:17px;color:#000080;letter-spacing:-0.1px;">crDefault</div>
<div style="left:0px;top:160px;width:172px;height:1px;background:#f0f0f0;"></div>
<div style="left:0;top:145px;width:74px;height:15px;overflow:hidden;"><div class="t" style="left:12px;top:0;height:15px;line-height:17px;letter-spacing:-0.1px;">DataField</div></div>
<div style="left:0px;top:176px;width:172px;height:1px;background:#f0f0f0;"></div>
<div style="left:0;top:161px;width:74px;height:15px;overflow:hidden;"><div class="t" style="left:12px;top:0;height:15px;line-height:17px;letter-spacing:-0.1px;">DataSet</div></div>
<div class="t" style="left:77px;top:161px;height:15px;line-height:17px;color:#000080;letter-spacing:-0.1px;">(Не визначений)</div>
<div style="left:0px;top:192px;width:172px;height:1px;background:#f0f0f0;"></div>
<div style="left:0;top:177px;width:74px;height:15px;overflow:hidden;"><div class="t" style="left:12px;top:0;height:15px;line-height:17px;letter-spacing:-0.1px;">Description</div></div>
<div style="left:0px;top:208px;width:172px;height:1px;background:#f0f0f0;"></div>
<svg style="left:2px;top:196px;" width="9" height="9" viewBox="0 0 9 9"><rect x="0.5" y="0.5" width="8" height="8" fill="#fff" stroke="#848484"/><path d="M2 4.500h5M4.500 2v5" stroke="#555"/></svg>
<div style="left:0;top:193px;width:74px;height:15px;overflow:hidden;"><div class="t" style="left:12px;top:0;height:15px;line-height:17px;letter-spacing:-0.1px;">DisplayForma</div></div>
<div style="left:0px;top:224px;width:172px;height:1px;background:#f0f0f0;"></div>
<div style="left:0;top:209px;width:74px;height:15px;overflow:hidden;"><div class="t" style="left:12px;top:0;height:15px;line-height:17px;letter-spacing:-0.1px;">ExpressionDe</div></div>
<div class="t" style="left:77px;top:209px;height:15px;line-height:17px;color:#000080;letter-spacing:-0.1px;">[,]</div>
<div style="left:0px;top:240px;width:172px;height:1px;background:#f0f0f0;"></div>
<div style="left:0;top:225px;width:74px;height:15px;overflow:hidden;"><div class="t" style="left:12px;top:0;height:15px;line-height:17px;letter-spacing:-0.1px;">FlowTo</div></div>
<div style="left:0px;top:256px;width:172px;height:1px;background:#f0f0f0;"></div>
<svg style="left:2px;top:244px;" width="9" height="9" viewBox="0 0 9 9"><rect x="0.5" y="0.5" width="8" height="8" fill="#fff" stroke="#848484"/><path d="M2 4.500h5M4.500 2v5" stroke="#555"/></svg>
<div style="left:0;top:241px;width:74px;height:15px;overflow:hidden;"><div class="t" style="left:12px;top:0;height:15px;line-height:17px;letter-spacing:-0.1px;">Font</div></div>
<div class="t" style="left:77px;top:241px;height:15px;line-height:17px;color:#000080;letter-spacing:-0.1px;">(TFont)</div>
<div style="left:0px;top:272px;width:172px;height:1px;background:#f0f0f0;"></div>
<svg style="left:2px;top:260px;" width="9" height="9" viewBox="0 0 9 9"><rect x="0.5" y="0.5" width="8" height="8" fill="#fff" stroke="#848484"/><path d="M2 4.500h5M4.500 2v5" stroke="#555"/></svg>
<div style="left:0;top:257px;width:74px;height:15px;overflow:hidden;"><div class="t" style="left:12px;top:0;height:15px;line-height:17px;letter-spacing:-0.1px;">Frame</div></div>
<div class="t" style="left:77px;top:257px;height:15px;line-height:17px;color:#000080;letter-spacing:-0.1px;">(TfrxFrame)</div>
<div style="left:0px;top:288px;width:172px;height:1px;background:#f0f0f0;"></div>
<div style="left:0;top:273px;width:74px;height:15px;overflow:hidden;"><div class="t" style="left:12px;top:0;height:15px;line-height:17px;letter-spacing:-0.1px;">GapX</div></div>
<div class="t" style="left:77px;top:273px;height:15px;line-height:17px;color:#000080;letter-spacing:-0.1px;">2</div>
<div style="left:0px;top:304px;width:172px;height:1px;background:#f0f0f0;"></div>
<div style="left:0;top:289px;width:74px;height:15px;overflow:hidden;"><div class="t" style="left:12px;top:0;height:15px;line-height:17px;letter-spacing:-0.1px;">GapY</div></div>
<div class="t" style="left:77px;top:289px;height:15px;line-height:17px;color:#000080;letter-spacing:-0.1px;">1</div>
<div style="left:0px;top:320px;width:172px;height:1px;background:#f0f0f0;"></div>
<div style="left:0;top:305px;width:74px;height:15px;overflow:hidden;"><div class="t" style="left:12px;top:0;height:15px;line-height:17px;letter-spacing:-0.1px;">HAlign</div></div>
<div class="t" style="left:77px;top:305px;height:15px;line-height:17px;color:#000080;letter-spacing:-0.1px;">haLeft</div>
<div style="left:0px;top:336px;width:172px;height:1px;background:#f0f0f0;"></div>
<div style="left:0;top:321px;width:74px;height:15px;overflow:hidden;"><div class="t b" style="left:12px;top:0;height:15px;line-height:17px;letter-spacing:0.6px;">Height</div></div>
<div class="t b" style="left:77px;top:321px;height:15px;line-height:17px;color:#000080;letter-spacing:0.6px;">0,50</div>
<div style="left:0px;top:352px;width:172px;height:1px;background:#f0f0f0;"></div>
<div style="left:0;top:337px;width:74px;height:15px;overflow:hidden;"><div class="t" style="left:12px;top:0;height:15px;line-height:17px;letter-spacing:-0.1px;">HideZeros</div></div>
<svg style="left:77px;top:339px;" width="11" height="11" viewBox="0 0 11 11"><rect x="0.500" y="0.500" width="10" height="10" fill="#fff" stroke="#6a6a6a"/></svg>
<div class="t" style="left:91px;top:337px;height:15px;line-height:17px;color:#000080;letter-spacing:-0.1px;">False</div>
<div style="left:0px;top:368px;width:172px;height:1px;background:#f0f0f0;"></div>
<svg style="left:2px;top:356px;" width="9" height="9" viewBox="0 0 9 9"><rect x="0.5" y="0.5" width="8" height="8" fill="#fff" stroke="#848484"/><path d="M2 4.500h5M4.500 2v5" stroke="#555"/></svg>
<div style="left:0;top:353px;width:74px;height:15px;overflow:hidden;"><div class="t" style="left:12px;top:0;height:15px;line-height:17px;letter-spacing:-0.1px;">Highlight</div></div>
<div class="t" style="left:77px;top:353px;height:15px;line-height:17px;color:#000080;letter-spacing:-0.1px;">(TfrxHighlight)</div>
<div style="left:0px;top:384px;width:172px;height:1px;background:#f0f0f0;"></div>
<div style="left:0;top:369px;width:74px;height:15px;overflow:hidden;"><div class="t" style="left:12px;top:0;height:15px;line-height:17px;letter-spacing:-0.1px;">Hint</div></div>
<div style="left:0px;top:400px;width:172px;height:1px;background:#f0f0f0;"></div>
<div style="left:0;top:385px;width:74px;height:15px;overflow:hidden;"><div class="t b" style="left:12px;top:0;height:15px;line-height:17px;letter-spacing:0.6px;">Left</div></div>
<div class="t b" style="left:77px;top:385px;height:15px;line-height:17px;color:#000080;letter-spacing:0.6px;">3,90</div>
<div style="left:0px;top:416px;width:172px;height:1px;background:#f0f0f0;"></div>
<div style="left:0;top:401px;width:74px;height:15px;overflow:hidden;"><div class="t" style="left:12px;top:0;height:15px;line-height:17px;letter-spacing:-0.1px;">LineSpacing</div></div>
<div class="t" style="left:77px;top:401px;height:15px;line-height:17px;color:#000080;letter-spacing:-0.1px;">2</div>
<div style="left:74px;top:0px;width:1px;height:409px;background:#f0f0f0;"></div>
</div>
<div style="left:188px;top:431px;width:13px;height:13px;background:#e1e1e1;border:1px solid #adadad;"></div>
<svg style="left:191px;top:436px;" width="7" height="4" viewBox="0 0 7 4"><path d="M0 0h7L3.5 4z" fill="#000"/></svg>
<div style="left:203px;top:429px;width:17px;height:409px;background:#f0f0f0;"></div>
<svg style="left:206px;top:436px;" width="9" height="6" viewBox="0 0 9 6"><path d="M1.200 5L4.500 1.700L7.800 5" fill="none" stroke="#555" stroke-width="1.800"/></svg>
<svg style="left:206px;top:826px;" width="9" height="6" viewBox="0 0 9 6"><path d="M1.200 1L4.500 4.300L7.800 1" fill="none" stroke="#555" stroke-width="1.800"/></svg>
<div style="left:204px;top:447px;width:15px;height:186px;background:#cdcdcd;"></div>
<div style="left:28px;top:843px;width:193px;height:65px;background:#fff;border:1px solid #999;"></div>
<div class="t b" style="left:30px;top:845px;height:15px;line-height:15px;letter-spacing:0.2px;">Align</div>
<div class="t" style="left:30px;top:861px;height:15px;line-height:15px;letter-spacing:0.05px;">Вирівнювання об'єкта щодо батька</div>
<div style="left:221px;top:504px;width:6px;height:29px;background:#d8d8cc;"></div>
<svg style="left:223px;top:509px;" width="3" height="21" viewBox="0 0 3 21"><rect x="0" y="0" width="1" height="1" fill="#fff"/><rect x="1" y="1" width="1" height="1" fill="#9a9a8a"/><rect x="0" y="3" width="1" height="1" fill="#fff"/><rect x="1" y="4" width="1" height="1" fill="#9a9a8a"/><rect x="0" y="6" width="1" height="1" fill="#fff"/><rect x="1" y="7" width="1" height="1" fill="#9a9a8a"/><rect x="0" y="9" width="1" height="1" fill="#fff"/><rect x="1" y="10" width="1" height="1" fill="#9a9a8a"/><rect x="0" y="12" width="1" height="1" fill="#fff"/><rect x="1" y="13" width="1" height="1" fill="#9a9a8a"/><rect x="0" y="15" width="1" height="1" fill="#fff"/><rect x="1" y="16" width="1" height="1" fill="#9a9a8a"/><rect x="0" y="18" width="1" height="1" fill="#fff"/><rect x="1" y="19" width="1" height="1" fill="#9a9a8a"/></svg>
<div style="left:309px;top:132px;width:956px;height:14px;background:#fff;"></div>
<svg style="left:309px;top:132px;" width="956" height="14" viewBox="0 0 956 14"><rect x="5.41" y="5" width="1" height="2" fill="#000"/><rect x="10.33" y="5" width="1" height="2" fill="#000"/><rect x="15.24" y="5" width="1" height="2" fill="#000"/><rect x="20.16" y="5" width="1" height="2" fill="#000"/><rect x="25.07" y="4" width="1" height="4" fill="#000"/><rect x="29.98" y="5" width="1" height="2" fill="#000"/><rect x="34.90" y="5" width="1" height="2" fill="#000"/><rect x="39.81" y="5" width="1" height="2" fill="#000"/><rect x="44.73" y="5" width="1" height="2" fill="#000"/><rect x="54.55" y="5" width="1" height="2" fill="#000"/><rect x="59.47" y="5" width="1" height="2" fill="#000"/><rect x="64.38" y="5" width="1" height="2" fill="#000"/><rect x="69.30" y="5" width="1" height="2" fill="#000"/><rect x="74.21" y="4" width="1" height="4" fill="#000"/><rect x="79.12" y="5" width="1" height="2" fill="#000"/><rect x="84.04" y="5" width="1" height="2" fill="#000"/><rect x="88.95" y="5" width="1" height="2" fill="#000"/><rect x="93.87" y="5" width="1" height="2" fill="#000"/><rect x="103.69" y="5" width="1" height="2" fill="#000"/><rect x="108.61" y="5" width="1" height="2" fill="#000"/><rect x="113.52" y="5" width="1" height="2" fill="#000"/><rect x="118.44" y="5" width="1" height="2" fill="#000"/><rect x="123.35" y="4" width="1" height="4" fill="#000"/><rect x="128.26" y="5" width="1" height="2" fill="#000"/><rect x="133.18" y="5" width="1" height="2" fill="#000"/><rect x="138.09" y="5" width="1" height="2" fill="#000"/><rect x="143.01" y="5" width="1" height="2" fill="#000"/><rect x="152.83" y="5" width="1" height="2" fill="#000"/><rect x="157.75" y="5" width="1" height="2" fill="#000"/><rect x="162.66" y="5" width="1" height="2" fill="#000"/><rect x="167.58" y="5" width="1" height="2" fill="#000"/><rect x="172.49" y="4" width="1" height="4" fill="#000"/><rect x="177.40" y="5" width="1" height="2" fill="#000"/><rect x="182.32" y="5" width="1" height="2" fill="#000"/><rect x="187.23" y="5" width="1" height="2" fill="#000"/><rect x="192.15" y="5" width="1" height="2" fill="#000"/><rect x="201.97" y="5" width="1" height="2" fill="#000"/><rect x="206.89" y="5" width="1" height="2" fill="#000"/><rect x="211.80" y="5" width="1" height="2" fill="#000"/><rect x="216.72" y="5" width="1" height="2" fill="#000"/><rect x="221.63" y="4" width="1" height="4" fill="#000"/><rect x="226.54" y="5" width="1" height="2" fill="#000"/><rect x="231.46" y="5" width="1" height="2" fill="#000"/><rect x="236.37" y="5" width="1" height="2" fill="#000"/><rect x="241.29" y="5" width="1" height="2" fill="#000"/><rect x="251.11" y="5" width="1" height="2" fill="#000"/><rect x="256.03" y="5" width="1" height="2" fill="#000"/><rect x="260.94" y="5" width="1" height="2" fill="#000"/><rect x="265.86" y="5" width="1" height="2" fill="#000"/><rect x="270.77" y="4" width="1" height="4" fill="#000"/><rect x="275.68" y="5" width="1" height="2" fill="#000"/><rect x="280.60" y="5" width="1" height="2" fill="#000"/><rect x="285.51" y="5" width="1" height="2" fill="#000"/><rect x="290.43" y="5" width="1" height="2" fill="#000"/><rect x="300.25" y="5" width="1" height="2" fill="#000"/><rect x="305.17" y="5" width="1" height="2" fill="#000"/><rect x="310.08" y="5" width="1" height="2" fill="#000"/><rect x="315.00" y="5" width="1" height="2" fill="#000"/><rect x="319.91" y="4" width="1" height="4" fill="#000"/><rect x="324.82" y="5" width="1" height="2" fill="#000"/><rect x="329.74" y="5" width="1" height="2" fill="#000"/><rect x="334.65" y="5" width="1" height="2" fill="#000"/><rect x="339.57" y="5" width="1" height="2" fill="#000"/><rect x="349.39" y="5" width="1" height="2" fill="#000"/><rect x="354.31" y="5" width="1" height="2" fill="#000"/><rect x="359.22" y="5" width="1" height="2" fill="#000"/><rect x="364.14" y="5" width="1" height="2" fill="#000"/><rect x="369.05" y="4" width="1" height="4" fill="#000"/><rect x="373.96" y="5" width="1" height="2" fill="#000"/><rect x="378.88" y="5" width="1" height="2" fill="#000"/><rect x="383.79" y="5" width="1" height="2" fill="#000"/><rect x="388.71" y="5" width="1" height="2" fill="#000"/><rect x="398.53" y="5" width="1" height="2" fill="#000"/><rect x="403.45" y="5" width="1" height="2" fill="#000"/><rect x="408.36" y="5" width="1" height="2" fill="#000"/><rect x="413.28" y="5" width="1" height="2" fill="#000"/><rect x="418.19" y="4" width="1" height="4" fill="#000"/><rect x="423.10" y="5" width="1" height="2" fill="#000"/><rect x="428.02" y="5" width="1" height="2" fill="#000"/><rect x="432.93" y="5" width="1" height="2" fill="#000"/><rect x="437.85" y="5" width="1" height="2" fill="#000"/><rect x="447.67" y="5" width="1" height="2" fill="#000"/><rect x="452.59" y="5" width="1" height="2" fill="#000"/><rect x="457.50" y="5" width="1" height="2" fill="#000"/><rect x="462.42" y="5" width="1" height="2" fill="#000"/><rect x="467.33" y="4" width="1" height="4" fill="#000"/><rect x="472.24" y="5" width="1" height="2" fill="#000"/><rect x="477.16" y="5" width="1" height="2" fill="#000"/><rect x="482.07" y="5" width="1" height="2" fill="#000"/><rect x="486.99" y="5" width="1" height="2" fill="#000"/><rect x="496.81" y="5" width="1" height="2" fill="#000"/><rect x="501.73" y="5" width="1" height="2" fill="#000"/><rect x="506.64" y="5" width="1" height="2" fill="#000"/><rect x="511.56" y="5" width="1" height="2" fill="#000"/><rect x="516.47" y="4" width="1" height="4" fill="#000"/><rect x="521.38" y="5" width="1" height="2" fill="#000"/><rect x="526.30" y="5" width="1" height="2" fill="#000"/><rect x="531.21" y="5" width="1" height="2" fill="#000"/><rect x="536.13" y="5" width="1" height="2" fill="#000"/><rect x="545.95" y="5" width="1" height="2" fill="#000"/><rect x="550.87" y="5" width="1" height="2" fill="#000"/><rect x="555.78" y="5" width="1" height="2" fill="#000"/><rect x="560.70" y="5" width="1" height="2" fill="#000"/><rect x="565.61" y="4" width="1" height="4" fill="#000"/><rect x="570.52" y="5" width="1" height="2" fill="#000"/><rect x="575.44" y="5" width="1" height="2" fill="#000"/><rect x="580.35" y="5" width="1" height="2" fill="#000"/><rect x="585.27" y="5" width="1" height="2" fill="#000"/><rect x="595.09" y="5" width="1" height="2" fill="#000"/><rect x="600.01" y="5" width="1" height="2" fill="#000"/><rect x="604.92" y="5" width="1" height="2" fill="#000"/><rect x="609.84" y="5" width="1" height="2" fill="#000"/><rect x="614.75" y="4" width="1" height="4" fill="#000"/><rect x="619.66" y="5" width="1" height="2" fill="#000"/><rect x="624.58" y="5" width="1" height="2" fill="#000"/><rect x="629.49" y="5" width="1" height="2" fill="#000"/><rect x="634.41" y="5" width="1" height="2" fill="#000"/><rect x="644.23" y="5" width="1" height="2" fill="#000"/><rect x="649.15" y="5" width="1" height="2" fill="#000"/><rect x="654.06" y="5" width="1" height="2" fill="#000"/><rect x="658.98" y="5" width="1" height="2" fill="#000"/><rect x="663.89" y="4" width="1" height="4" fill="#000"/><rect x="668.80" y="5" width="1" height="2" fill="#000"/><rect x="673.72" y="5" width="1" height="2" fill="#000"/><rect x="678.63" y="5" width="1" height="2" fill="#000"/><rect x="683.55" y="5" width="1" height="2" fill="#000"/><rect x="693.37" y="5" width="1" height="2" fill="#000"/><rect x="698.29" y="5" width="1" height="2" fill="#000"/><rect x="703.20" y="5" width="1" height="2" fill="#000"/><rect x="708.12" y="5" width="1" height="2" fill="#000"/><rect x="713.03" y="4" width="1" height="4" fill="#000"/><rect x="717.94" y="5" width="1" height="2" fill="#000"/><rect x="722.86" y="5" width="1" height="2" fill="#000"/><rect x="727.77" y="5" width="1" height="2" fill="#000"/><rect x="732.69" y="5" width="1" height="2" fill="#000"/><rect x="742.51" y="5" width="1" height="2" fill="#000"/><rect x="747.43" y="5" width="1" height="2" fill="#000"/><rect x="752.34" y="5" width="1" height="2" fill="#000"/><rect x="757.26" y="5" width="1" height="2" fill="#000"/><rect x="762.17" y="4" width="1" height="4" fill="#000"/><rect x="767.08" y="5" width="1" height="2" fill="#000"/><rect x="772.00" y="5" width="1" height="2" fill="#000"/><rect x="776.91" y="5" width="1" height="2" fill="#000"/><rect x="781.83" y="5" width="1" height="2" fill="#000"/><rect x="791.65" y="5" width="1" height="2" fill="#000"/><rect x="796.57" y="5" width="1" height="2" fill="#000"/><rect x="801.48" y="5" width="1" height="2" fill="#000"/><rect x="806.40" y="5" width="1" height="2" fill="#000"/><rect x="811.31" y="4" width="1" height="4" fill="#000"/><rect x="816.22" y="5" width="1" height="2" fill="#000"/><rect x="821.14" y="5" width="1" height="2" fill="#000"/><rect x="826.05" y="5" width="1" height="2" fill="#000"/><rect x="830.97" y="5" width="1" height="2" fill="#000"/><rect x="840.79" y="5" width="1" height="2" fill="#000"/><rect x="845.71" y="5" width="1" height="2" fill="#000"/><rect x="850.62" y="5" width="1" height="2" fill="#000"/><rect x="855.54" y="5" width="1" height="2" fill="#000"/><rect x="860.45" y="4" width="1" height="4" fill="#000"/><rect x="865.36" y="5" width="1" height="2" fill="#000"/><rect x="870.28" y="5" width="1" height="2" fill="#000"/><rect x="875.19" y="5" width="1" height="2" fill="#000"/><rect x="880.11" y="5" width="1" height="2" fill="#000"/><rect x="889.93" y="5" width="1" height="2" fill="#000"/><rect x="894.85" y="5" width="1" height="2" fill="#000"/><rect x="899.76" y="5" width="1" height="2" fill="#000"/><rect x="904.68" y="5" width="1" height="2" fill="#000"/><rect x="909.59" y="4" width="1" height="4" fill="#000"/><rect x="914.50" y="5" width="1" height="2" fill="#000"/><rect x="919.42" y="5" width="1" height="2" fill="#000"/><rect x="924.33" y="5" width="1" height="2" fill="#000"/><rect x="929.25" y="5" width="1" height="2" fill="#000"/><rect x="939.07" y="5" width="1" height="2" fill="#000"/><rect x="943.99" y="5" width="1" height="2" fill="#000"/><rect x="948.90" y="5" width="1" height="2" fill="#000"/><text x="50.1" y="9.5" font-size="9.500" text-anchor="middle" font-family="Liberation Sans" fill="#000">1</text><text x="99.3" y="9.5" font-size="9.500" text-anchor="middle" font-family="Liberation Sans" fill="#000">2</text><text x="148.4" y="9.5" font-size="9.500" text-anchor="middle" font-family="Liberation Sans" fill="#000">3</text><text x="197.6" y="9.5" font-size="9.500" text-anchor="middle" font-family="Liberation Sans" fill="#000">4</text><text x="246.7" y="9.5" font-size="9.500" text-anchor="middle" font-family="Liberation Sans" fill="#000">5</text><text x="295.8" y="9.5" font-size="9.500" text-anchor="middle" font-family="Liberation Sans" fill="#000">6</text><text x="345.0" y="9.5" font-size="9.500" text-anchor="middle" font-family="Liberation Sans" fill="#000">7</text><text x="394.1" y="9.5" font-size="9.500" text-anchor="middle" font-family="Liberation Sans" fill="#000">8</text><text x="443.3" y="9.5" font-size="9.500" text-anchor="middle" font-family="Liberation Sans" fill="#000">9</text><text x="492.4" y="9.5" font-size="9.500" text-anchor="middle" font-family="Liberation Sans" fill="#000">10</text><text x="541.5" y="9.5" font-size="9.500" text-anchor="middle" font-family="Liberation Sans" fill="#000">11</text><text x="590.7" y="9.5" font-size="9.500" text-anchor="middle" font-family="Liberation Sans" fill="#000">12</text><text x="639.8" y="9.5" font-size="9.500" text-anchor="middle" font-family="Liberation Sans" fill="#000">13</text><text x="689.0" y="9.5" font-size="9.500" text-anchor="middle" font-family="Liberation Sans" fill="#000">14</text><text x="738.1" y="9.5" font-size="9.500" text-anchor="middle" font-family="Liberation Sans" fill="#000">15</text><text x="787.2" y="9.5" font-size="9.500" text-anchor="middle" font-family="Liberation Sans" fill="#000">16</text><text x="836.4" y="9.5" font-size="9.500" text-anchor="middle" font-family="Liberation Sans" fill="#000">17</text><text x="885.5" y="9.5" font-size="9.500" text-anchor="middle" font-family="Liberation Sans" fill="#000">18</text><text x="934.7" y="9.5" font-size="9.500" text-anchor="middle" font-family="Liberation Sans" fill="#000">19</text><rect x="192" y="0" width="1.3" height="14" fill="#000"/></svg>
<div style="left:230px;top:212px;width:13px;height:696px;background:#fff;"></div>
<svg style="left:230px;top:212px;" width="14" height="696" viewBox="0 0 14 696"><rect x="0" y="0" width="14" height="1.3" fill="#000"/><rect x="5" y="5.21" width="2" height="1" fill="#000"/><rect x="5" y="10.13" width="2" height="1" fill="#000"/><rect x="5" y="15.04" width="2" height="1" fill="#000"/><rect x="5" y="19.96" width="2" height="1" fill="#000"/><rect x="4" y="24.87" width="4" height="1" fill="#000"/><rect x="5" y="29.78" width="2" height="1" fill="#000"/><rect x="5" y="34.70" width="2" height="1" fill="#000"/><rect x="5" y="39.61" width="2" height="1" fill="#000"/><rect x="5" y="44.53" width="2" height="1" fill="#000"/><rect x="5" y="54.35" width="2" height="1" fill="#000"/><rect x="5" y="59.27" width="2" height="1" fill="#000"/><rect x="5" y="64.18" width="2" height="1" fill="#000"/><rect x="5" y="69.10" width="2" height="1" fill="#000"/><rect x="4" y="74.01" width="4" height="1" fill="#000"/><rect x="5" y="78.92" width="2" height="1" fill="#000"/><rect x="5" y="83.84" width="2" height="1" fill="#000"/><rect x="5" y="88.75" width="2" height="1" fill="#000"/><rect x="5" y="93.67" width="2" height="1" fill="#000"/><rect x="5" y="103.49" width="2" height="1" fill="#000"/><rect x="5" y="108.41" width="2" height="1" fill="#000"/><rect x="5" y="113.32" width="2" height="1" fill="#000"/><rect x="5" y="118.24" width="2" height="1" fill="#000"/><rect x="4" y="123.15" width="4" height="1" fill="#000"/><rect x="5" y="128.06" width="2" height="1" fill="#000"/><rect x="5" y="132.98" width="2" height="1" fill="#000"/><rect x="5" y="137.89" width="2" height="1" fill="#000"/><rect x="5" y="142.81" width="2" height="1" fill="#000"/><rect x="5" y="152.63" width="2" height="1" fill="#000"/><rect x="5" y="157.55" width="2" height="1" fill="#000"/><rect x="5" y="162.46" width="2" height="1" fill="#000"/><rect x="5" y="167.38" width="2" height="1" fill="#000"/><rect x="4" y="172.29" width="4" height="1" fill="#000"/><rect x="5" y="177.20" width="2" height="1" fill="#000"/><rect x="5" y="182.12" width="2" height="1" fill="#000"/><rect x="5" y="187.03" width="2" height="1" fill="#000"/><rect x="5" y="191.95" width="2" height="1" fill="#000"/><rect x="5" y="201.77" width="2" height="1" fill="#000"/><rect x="5" y="206.69" width="2" height="1" fill="#000"/><rect x="5" y="211.60" width="2" height="1" fill="#000"/><rect x="5" y="216.52" width="2" height="1" fill="#000"/><rect x="4" y="221.43" width="4" height="1" fill="#000"/><rect x="5" y="226.34" width="2" height="1" fill="#000"/><rect x="5" y="231.26" width="2" height="1" fill="#000"/><rect x="5" y="236.17" width="2" height="1" fill="#000"/><rect x="5" y="241.09" width="2" height="1" fill="#000"/><rect x="5" y="250.91" width="2" height="1" fill="#000"/><rect x="5" y="255.83" width="2" height="1" fill="#000"/><rect x="5" y="260.74" width="2" height="1" fill="#000"/><rect x="5" y="265.66" width="2" height="1" fill="#000"/><rect x="4" y="270.57" width="4" height="1" fill="#000"/><rect x="5" y="275.48" width="2" height="1" fill="#000"/><rect x="5" y="280.40" width="2" height="1" fill="#000"/><rect x="5" y="285.31" width="2" height="1" fill="#000"/><rect x="5" y="290.23" width="2" height="1" fill="#000"/><rect x="5" y="300.05" width="2" height="1" fill="#000"/><rect x="5" y="304.97" width="2" height="1" fill="#000"/><rect x="5" y="309.88" width="2" height="1" fill="#000"/><rect x="5" y="314.80" width="2" height="1" fill="#000"/><rect x="4" y="319.71" width="4" height="1" fill="#000"/><rect x="5" y="324.62" width="2" height="1" fill="#000"/><rect x="5" y="329.54" width="2" height="1" fill="#000"/><rect x="5" y="334.45" width="2" height="1" fill="#000"/><rect x="5" y="339.37" width="2" height="1" fill="#000"/><rect x="5" y="349.19" width="2" height="1" fill="#000"/><rect x="5" y="354.11" width="2" height="1" fill="#000"/><rect x="5" y="359.02" width="2" height="1" fill="#000"/><rect x="5" y="363.94" width="2" height="1" fill="#000"/><rect x="4" y="368.85" width="4" height="1" fill="#000"/><rect x="5" y="373.76" width="2" height="1" fill="#000"/><rect x="5" y="378.68" width="2" height="1" fill="#000"/><rect x="5" y="383.59" width="2" height="1" fill="#000"/><rect x="5" y="388.51" width="2" height="1" fill="#000"/><rect x="5" y="398.33" width="2" height="1" fill="#000"/><rect x="5" y="403.25" width="2" height="1" fill="#000"/><rect x="5" y="408.16" width="2" height="1" fill="#000"/><rect x="5" y="413.08" width="2" height="1" fill="#000"/><rect x="4" y="417.99" width="4" height="1" fill="#000"/><rect x="5" y="422.90" width="2" height="1" fill="#000"/><rect x="5" y="427.82" width="2" height="1" fill="#000"/><rect x="5" y="432.73" width="2" height="1" fill="#000"/><rect x="5" y="437.65" width="2" height="1" fill="#000"/><rect x="5" y="447.47" width="2" height="1" fill="#000"/><rect x="5" y="452.39" width="2" height="1" fill="#000"/><rect x="5" y="457.30" width="2" height="1" fill="#000"/><rect x="5" y="462.22" width="2" height="1" fill="#000"/><rect x="4" y="467.13" width="4" height="1" fill="#000"/><rect x="5" y="472.04" width="2" height="1" fill="#000"/><rect x="5" y="476.96" width="2" height="1" fill="#000"/><rect x="5" y="481.87" width="2" height="1" fill="#000"/><rect x="5" y="486.79" width="2" height="1" fill="#000"/><rect x="5" y="496.61" width="2" height="1" fill="#000"/><rect x="5" y="501.53" width="2" height="1" fill="#000"/><rect x="5" y="506.44" width="2" height="1" fill="#000"/><rect x="5" y="511.36" width="2" height="1" fill="#000"/><rect x="4" y="516.27" width="4" height="1" fill="#000"/><rect x="5" y="521.18" width="2" height="1" fill="#000"/><rect x="5" y="526.10" width="2" height="1" fill="#000"/><rect x="5" y="531.01" width="2" height="1" fill="#000"/><rect x="5" y="535.93" width="2" height="1" fill="#000"/><rect x="5" y="545.75" width="2" height="1" fill="#000"/><rect x="5" y="550.67" width="2" height="1" fill="#000"/><rect x="5" y="555.58" width="2" height="1" fill="#000"/><rect x="5" y="560.50" width="2" height="1" fill="#000"/><rect x="4" y="565.41" width="4" height="1" fill="#000"/><rect x="5" y="570.32" width="2" height="1" fill="#000"/><rect x="5" y="575.24" width="2" height="1" fill="#000"/><rect x="5" y="580.15" width="2" height="1" fill="#000"/><rect x="5" y="585.07" width="2" height="1" fill="#000"/><rect x="5" y="594.89" width="2" height="1" fill="#000"/><rect x="5" y="599.81" width="2" height="1" fill="#000"/><rect x="5" y="604.72" width="2" height="1" fill="#000"/><rect x="5" y="609.64" width="2" height="1" fill="#000"/><rect x="4" y="614.55" width="4" height="1" fill="#000"/><rect x="5" y="619.46" width="2" height="1" fill="#000"/><rect x="5" y="624.38" width="2" height="1" fill="#000"/><rect x="5" y="629.29" width="2" height="1" fill="#000"/><rect x="5" y="634.21" width="2" height="1" fill="#000"/><rect x="5" y="644.03" width="2" height="1" fill="#000"/><rect x="5" y="648.95" width="2" height="1" fill="#000"/><rect x="5" y="653.86" width="2" height="1" fill="#000"/><rect x="5" y="658.78" width="2" height="1" fill="#000"/><rect x="4" y="663.69" width="4" height="1" fill="#000"/><rect x="5" y="668.60" width="2" height="1" fill="#000"/><rect x="5" y="673.52" width="2" height="1" fill="#000"/><rect x="5" y="678.43" width="2" height="1" fill="#000"/><rect x="5" y="683.35" width="2" height="1" fill="#000"/><rect x="5" y="693.17" width="2" height="1" fill="#000"/><text transform="translate(8.800 49.9) rotate(-90)" font-size="9.500" text-anchor="middle" font-family="Liberation Sans" fill="#000">1</text><text transform="translate(8.800 99.1) rotate(-90)" font-size="9.500" text-anchor="middle" font-family="Liberation Sans" fill="#000">2</text><text transform="translate(8.800 148.2) rotate(-90)" font-size="9.500" text-anchor="middle" font-family="Liberation Sans" fill="#000">3</text><text transform="translate(8.800 197.4) rotate(-90)" font-size="9.500" text-anchor="middle" font-family="Liberation Sans" fill="#000">4</text><text transform="translate(8.800 246.5) rotate(-90)" font-size="9.500" text-anchor="middle" font-family="Liberation Sans" fill="#000">5</text><text transform="translate(8.800 295.6) rotate(-90)" font-size="9.500" text-anchor="middle" font-family="Liberation Sans" fill="#000">6</text><text transform="translate(8.800 344.8) rotate(-90)" font-size="9.500" text-anchor="middle" font-family="Liberation Sans" fill="#000">7</text><text transform="translate(8.800 393.9) rotate(-90)" font-size="9.500" text-anchor="middle" font-family="Liberation Sans" fill="#000">8</text><text transform="translate(8.800 443.1) rotate(-90)" font-size="9.500" text-anchor="middle" font-family="Liberation Sans" fill="#000">9</text><text transform="translate(8.800 492.2) rotate(-90)" font-size="9.500" text-anchor="middle" font-family="Liberation Sans" fill="#000">10</text><text transform="translate(8.800 541.3) rotate(-90)" font-size="9.500" text-anchor="middle" font-family="Liberation Sans" fill="#000">11</text><text transform="translate(8.800 590.5) rotate(-90)" font-size="9.500" text-anchor="middle" font-family="Liberation Sans" fill="#000">12</text><text transform="translate(8.800 639.6) rotate(-90)" font-size="9.500" text-anchor="middle" font-family="Liberation Sans" fill="#000">13</text><text transform="translate(8.800 688.8) rotate(-90)" font-size="9.500" text-anchor="middle" font-family="Liberation Sans" fill="#000">14</text></svg>
<div style="left:248px;top:151px;width:1000px;height:740px;background:#808080;"></div>
<div style="left:258px;top:161px;width:990px;height:730px;background:#fff;border-left:1px solid #505050;border-top:1px solid #505050;"></div>
<div style="left:258px;top:161px;width:990px;height:730px;overflow:hidden;">
<div style="left:-258px;top:-161px;width:1562px;height:930px;">
<svg style="left:308px;top:210px;" width="933" height="681" viewBox="0 0 933 681"><rect x="23.90" y="0" width="1" height="681" fill="#f2f2f2"/><rect x="48.45" y="0" width="1" height="681" fill="#e6e6e6"/><rect x="73.00" y="0" width="1" height="681" fill="#f2f2f2"/><rect x="97.55" y="0" width="1" height="681" fill="#e6e6e6"/><rect x="122.10" y="0" width="1" height="681" fill="#f2f2f2"/><rect x="146.65" y="0" width="1" height="681" fill="#e6e6e6"/><rect x="171.20" y="0" width="1" height="681" fill="#f2f2f2"/><rect x="195.75" y="0" width="1" height="681" fill="#e6e6e6"/><rect x="220.30" y="0" width="1" height="681" fill="#f2f2f2"/><rect x="244.85" y="0" width="1" height="681" fill="#e6e6e6"/><rect x="269.40" y="0" width="1" height="681" fill="#f2f2f2"/><rect x="293.95" y="0" width="1" height="681" fill="#e6e6e6"/><rect x="318.50" y="0" width="1" height="681" fill="#f2f2f2"/><rect x="343.05" y="0" width="1" height="681" fill="#e6e6e6"/><rect x="367.60" y="0" width="1" height="681" fill="#f2f2f2"/><rect x="392.15" y="0" width="1" height="681" fill="#e6e6e6"/><rect x="416.70" y="0" width="1" height="681" fill="#f2f2f2"/><rect x="441.25" y="0" width="1" height="681" fill="#e6e6e6"/><rect x="465.80" y="0" width="1" height="681" fill="#f2f2f2"/><rect x="490.35" y="0" width="1" height="681" fill="#e6e6e6"/><rect x="514.90" y="0" width="1" height="681" fill="#f2f2f2"/><rect x="539.45" y="0" width="1" height="681" fill="#e6e6e6"/><rect x="564.00" y="0" width="1" height="681" fill="#f2f2f2"/><rect x="588.55" y="0" width="1" height="681" fill="#e6e6e6"/><rect x="613.10" y="0" width="1" height="681" fill="#f2f2f2"/><rect x="637.65" y="0" width="1" height="681" fill="#e6e6e6"/><rect x="662.20" y="0" width="1" height="681" fill="#f2f2f2"/><rect x="686.75" y="0" width="1" height="681" fill="#e6e6e6"/><rect x="711.30" y="0" width="1" height="681" fill="#f2f2f2"/><rect x="735.85" y="0" width="1" height="681" fill="#e6e6e6"/><rect x="760.40" y="0" width="1" height="681" fill="#f2f2f2"/><rect x="784.95" y="0" width="1" height="681" fill="#e6e6e6"/><rect x="809.50" y="0" width="1" height="681" fill="#f2f2f2"/><rect x="834.05" y="0" width="1" height="681" fill="#e6e6e6"/><rect x="858.60" y="0" width="1" height="681" fill="#f2f2f2"/><rect x="883.15" y="0" width="1" height="681" fill="#e6e6e6"/><rect x="907.70" y="0" width="1" height="681" fill="#f2f2f2"/><rect x="932.25" y="0" width="1" height="681" fill="#e6e6e6"/><rect x="0" y="0.20" width="933" height="1" fill="#e6e6e6"/><rect x="0" y="24.75" width="933" height="1" fill="#f2f2f2"/><rect x="0" y="49.30" width="933" height="1" fill="#e6e6e6"/><rect x="0" y="73.85" width="933" height="1" fill="#f2f2f2"/><rect x="0" y="98.40" width="933" height="1" fill="#e6e6e6"/><rect x="0" y="122.95" width="933" height="1" fill="#f2f2f2"/><rect x="0" y="147.50" width="933" height="1" fill="#e6e6e6"/><rect x="0" y="172.05" width="933" height="1" fill="#f2f2f2"/><rect x="0" y="196.60" width="933" height="1" fill="#e6e6e6"/><rect x="0" y="221.15" width="933" height="1" fill="#f2f2f2"/><rect x="0" y="245.70" width="933" height="1" fill="#e6e6e6"/><rect x="0" y="270.25" width="933" height="1" fill="#f2f2f2"/><rect x="0" y="294.80" width="933" height="1" fill="#e6e6e6"/><rect x="0" y="319.35" width="933" height="1" fill="#f2f2f2"/><rect x="0" y="343.90" width="933" height="1" fill="#e6e6e6"/><rect x="0" y="368.45" width="933" height="1" fill="#f2f2f2"/><rect x="0" y="393.00" width="933" height="1" fill="#e6e6e6"/><rect x="0" y="417.55" width="933" height="1" fill="#f2f2f2"/><rect x="0" y="442.10" width="933" height="1" fill="#e6e6e6"/><rect x="0" y="466.65" width="933" height="1" fill="#f2f2f2"/><rect x="0" y="491.20" width="933" height="1" fill="#e6e6e6"/><rect x="0" y="515.75" width="933" height="1" fill="#f2f2f2"/><rect x="0" y="540.30" width="933" height="1" fill="#e6e6e6"/><rect x="0" y="564.85" width="933" height="1" fill="#f2f2f2"/><rect x="0" y="589.40" width="933" height="1" fill="#e6e6e6"/><rect x="0" y="613.95" width="933" height="1" fill="#f2f2f2"/><rect x="0" y="638.50" width="933" height="1" fill="#e6e6e6"/><rect x="0" y="663.05" width="933" height="1" fill="#f2f2f2"/></svg>
<div style="left:307px;top:210.5px;width:934px;height:24px;background:#f0f0f0;"></div>
<div class="t" style="left:313px;top:209.5px;height:22px;line-height:22px;font-size:13px;font-weight:bold;letter-spacing:0.27px;">ReportTitle<span style="font-weight:normal">:</span></div>
<div class="t" style="left:394px;top:209.5px;height:22px;line-height:22px;font-size:13px;letter-spacing:-0.03px;">ReportTitle1</div>
<div style="left:307px;top:209.5px;width:936px;height:1px;background-image:linear-gradient(90deg,#9a9a9a 60%,transparent 60%);background-size:5px 1px;"></div>
<div style="left:1242px;top:209px;width:1px;height:682px;background-image:linear-gradient(180deg,#bcbcbc 60%,transparent 60%);background-size:1px 5px;"></div>
<div style="left:307px;top:210px;width:1px;height:285px;background:#909090;"></div>
<div style="left:307px;top:495px;width:935px;height:1px;background:#909090;"></div>
<div style="left:307px;top:496px;width:936px;height:4.5px;background:#fff;"></div>
<div class="rt" style="left:310.4px;top:236px;font-size:20.8px;line-height:24px;font-weight:bold;letter-spacing:-0.12px;">Рахунок - фактура № [Номер рахунку] від</div>
<div class="rt" style="left:805px;top:236px;font-size:20.8px;line-height:24px;width:434px;text-align:right;overflow:hidden;font-weight:bold;font-style:italic;">[Назва підприємства]</div>
<div style="left:312px;top:274px;width:930px;height:1.4px;background:#000;"></div>
<div class="rt" style="left:310.4px;top:280.09999999999997px;font-size:20.8px;line-height:24px;width:144px;text-align:left;overflow:hidden;font-weight:bold;">Постачальни</div>
<div class="rt" style="left:461.6px;top:280.09999999999997px;font-size:20.8px;line-height:24px;font-weight:bold;font-style:italic;">[Постачальник]</div>
<div class="rt" style="left:310.4px;top:309.2px;font-size:20.8px;line-height:24px;width:144px;text-align:left;overflow:hidden;font-weight:bold;">Адреса:</div>
<div class="rt" style="left:461.6px;top:309.2px;font-size:20.8px;line-height:24px;letter-spacing:0.1px;">[Адреса Центру обліку]</div>
<div class="rt" style="left:310.4px;top:339.2px;font-size:20.8px;line-height:24px;width:144px;text-align:left;overflow:hidden;font-weight:bold;">Телефон:</div>
<div class="rt" style="left:461.6px;top:339.2px;font-size:20.8px;line-height:24px;letter-spacing:0.1px;">[Телефон Центру обліку]</div>
<div class="rt" style="left:310.4px;top:368.7px;font-size:20.8px;line-height:24px;font-weight:bold;">[Тип р/р]</div>
<div class="rt" style="left:457px;top:368.7px;font-size:20.8px;line-height:24px;letter-spacing:0.1px;">[Розрахунковий рахунок]</div>
<div class="rt" style="left:310.4px;top:432.7px;font-size:20.8px;line-height:24px;width:144px;text-align:left;overflow:hidden;font-weight:bold;">Платник:</div>
<div class="rt" style="left:461.6px;top:432.7px;font-size:20.8px;line-height:24px;font-weight:bold;font-style:italic;">[Платник]</div>
<div class="rt" style="left:310.4px;top:462.4px;font-size:20.8px;line-height:24px;width:144px;text-align:left;overflow:hidden;font-weight:bold;">Адреса:</div>
<div class="rt" style="left:461.6px;top:462.4px;font-size:20.8px;line-height:24px;letter-spacing:0.1px;">[Адреса платника]</div>
<div style="left:307px;top:500.5px;width:934px;height:23px;background:#f0f0f0;"></div>
<div class="t" style="left:313px;top:499.5px;height:21px;line-height:21px;font-size:13px;font-weight:bold;letter-spacing:-0.06px;">ColumnHeader<span style="font-weight:normal">:</span></div>
<div class="t" style="left:415px;top:499.5px;height:21px;line-height:21px;font-size:13px;letter-spacing:-0.36px;">ColumnHeader1</div>
<div style="left:307px;top:500px;width:935px;height:1px;background:#909090;"></div>
<div style="left:307px;top:500px;width:1px;height:122px;background-image:linear-gradient(180deg,#b0b0b0 60%,transparent 60%);background-size:1px 5px;"></div>
<div style="left:307px;top:524px;width:935px;height:46px;border:1.4px solid #000;border-right:none;"></div>
<div style="left:341px;top:524px;width:1.3px;height:46px;background:#000;"></div>
<div style="left:499px;top:524px;width:1.3px;height:46px;background:#000;"></div>
<div style="left:980px;top:524px;width:1.3px;height:46px;background:#000;"></div>
<div style="left:1054px;top:524px;width:1.3px;height:46px;background:#000;"></div>
<div style="left:1142px;top:524px;width:1.3px;height:46px;background:#000;"></div>
<div class="rt" style="left:308px;top:535px;font-size:20.8px;line-height:24px;width:34px;text-align:center;overflow:hidden;font-weight:bold;">№</div>
<div class="rt" style="left:342px;top:535px;font-size:20.8px;line-height:24px;width:158px;text-align:center;overflow:hidden;font-weight:bold;">Код</div>
<div class="rt" style="left:500px;top:535px;font-size:20.8px;line-height:24px;width:481px;text-align:center;overflow:hidden;font-weight:bold;">Назва</div>
<div class="rt" style="left:981px;top:535px;font-size:20.8px;line-height:24px;width:74px;text-align:center;overflow:hidden;font-weight:bold;">К-сть</div>
<div class="rt" style="left:1055px;top:535px;font-size:20.8px;line-height:24px;width:87px;text-align:center;overflow:hidden;font-weight:bold;">Ціна</div>
<div class="rt" style="left:1142px;top:535px;font-size:20.8px;line-height:24px;width:99px;text-align:center;overflow:hidden;font-weight:bold;">Сума</div>
<div style="left:307px;top:622.5px;width:934px;height:24.5px;background:#dea632;border-top:1px solid #8c8c8c;"></div>
<div class="t" style="left:313px;top:622px;height:22px;line-height:22px;font-size:13px;font-weight:bold;letter-spacing:0.5px;">MasterData<span style="font-weight:normal">:</span></div>
<div class="t" style="left:399.5px;top:622px;height:22px;line-height:22px;font-size:13px;letter-spacing:-0.4px;">MasterData1</div>
<div class="t" style="left:1100px;top:623px;height:22px;line-height:22px;font-size:13px;letter-spacing:-0.16px;">Перелік товару рахунку</div>
<svg style="left:1081px;top:627px;" width="12" height="14" viewBox="0 0 12 14"><path d="M0.5 2.5v9a5.5 2 0 0 0 11 0v-9z" fill="#f2c94a" stroke="#b98b1a"/><ellipse cx="6" cy="2.5" rx="5.5" ry="2" fill="#fdf0b0" stroke="#b98b1a"/><rect x="2" y="5" width="2" height="7" fill="#fff3c0" opacity="0.8"/></svg>
<div style="left:307px;top:647px;width:935px;height:25px;background:#fff;"></div>
<svg style="left:308px;top:647px;" width="934" height="25" viewBox="0 0 934 25"><rect x="23.90" y="0" width="1" height="25" fill="#f2f2f2"/><rect x="48.45" y="0" width="1" height="25" fill="#e6e6e6"/><rect x="73.00" y="0" width="1" height="25" fill="#f2f2f2"/><rect x="97.55" y="0" width="1" height="25" fill="#e6e6e6"/><rect x="122.10" y="0" width="1" height="25" fill="#f2f2f2"/><rect x="146.65" y="0" width="1" height="25" fill="#e6e6e6"/><rect x="171.20" y="0" width="1" height="25" fill="#f2f2f2"/><rect x="195.75" y="0" width="1" height="25" fill="#e6e6e6"/><rect x="220.30" y="0" width="1" height="25" fill="#f2f2f2"/><rect x="244.85" y="0" width="1" height="25" fill="#e6e6e6"/><rect x="269.40" y="0" width="1" height="25" fill="#f2f2f2"/><rect x="293.95" y="0" width="1" height="25" fill="#e6e6e6"/><rect x="318.50" y="0" width="1" height="25" fill="#f2f2f2"/><rect x="343.05" y="0" width="1" height="25" fill="#e6e6e6"/><rect x="367.60" y="0" width="1" height="25" fill="#f2f2f2"/><rect x="392.15" y="0" width="1" height="25" fill="#e6e6e6"/><rect x="416.70" y="0" width="1" height="25" fill="#f2f2f2"/><rect x="441.25" y="0" width="1" height="25" fill="#e6e6e6"/><rect x="465.80" y="0" width="1" height="25" fill="#f2f2f2"/><rect x="490.35" y="0" width="1" height="25" fill="#e6e6e6"/><rect x="514.90" y="0" width="1" height="25" fill="#f2f2f2"/><rect x="539.45" y="0" width="1" height="25" fill="#e6e6e6"/><rect x="564.00" y="0" width="1" height="25" fill="#f2f2f2"/><rect x="588.55" y="0" width="1" height="25" fill="#e6e6e6"/><rect x="613.10" y="0" width="1" height="25" fill="#f2f2f2"/><rect x="637.65" y="0" width="1" height="25" fill="#e6e6e6"/><rect x="662.20" y="0" width="1" height="25" fill="#f2f2f2"/><rect x="686.75" y="0" width="1" height="25" fill="#e6e6e6"/><rect x="711.30" y="0" width="1" height="25" fill="#f2f2f2"/><rect x="735.85" y="0" width="1" height="25" fill="#e6e6e6"/><rect x="760.40" y="0" width="1" height="25" fill="#f2f2f2"/><rect x="784.95" y="0" width="1" height="25" fill="#e6e6e6"/><rect x="809.50" y="0" width="1" height="25" fill="#f2f2f2"/><rect x="834.05" y="0" width="1" height="25" fill="#e6e6e6"/><rect x="858.60" y="0" width="1" height="25" fill="#f2f2f2"/><rect x="883.15" y="0" width="1" height="25" fill="#e6e6e6"/><rect x="907.70" y="0" width="1" height="25" fill="#f2f2f2"/><rect x="932.25" y="0" width="1" height="25" fill="#e6e6e6"/><rect x="0" y="5.10" width="934" height="1" fill="#e6e6e6"/></svg>
<div style="left:307px;top:647px;width:935px;height:25px;overflow:hidden;">
<div style="left:-307px;top:-647px;width:1562px;height:930px;">
<div class="rt" style="left:313px;top:648px;font-size:20.8px;line-height:24px;">ne</div>
<div class="rt" style="left:342px;top:638px;font-size:17.3px;line-height:20px;width:158px;text-align:center;overflow:hidden;">[Перелік товару<br>рахунку."Код"]</div>
<div class="rt" style="left:502px;top:648px;font-size:20.8px;line-height:24px;letter-spacing:0.2px;">[Перелік товару рахунку."Товар"]</div>
<div class="rt" style="left:981px;top:636px;font-size:20.8px;line-height:24px;width:73px;text-align:center;overflow:hidden;">товару<br>рахунк</div>
<div class="rt" style="left:1055px;top:636px;font-size:20.8px;line-height:24px;width:86px;text-align:right;overflow:hidden;">товару<br>рахунку.</div>
<div class="rt" style="left:1142px;top:636px;font-size:20.8px;line-height:24px;width:97px;text-align:right;overflow:hidden;">товару<br>рахунку."</div>
<div style="left:307px;top:647px;width:1.3px;height:25px;background:#000;"></div>
<div style="left:341px;top:647px;width:1.3px;height:25px;background:#000;"></div>
<div style="left:980px;top:647px;width:1.3px;height:25px;background:#000;"></div>
<div style="left:1054px;top:647px;width:1.3px;height:25px;background:#000;"></div>
<div style="left:1142px;top:647px;width:1.3px;height:25px;background:#000;"></div>
</div></div>
<div style="left:307px;top:646.5px;width:935px;height:1.4px;background:#1fc4ee;"></div>
<div style="left:307px;top:671.5px;width:935px;height:1.4px;background:#1fc4ee;"></div>
<div style="left:1142px;top:671.3px;width:99px;height:1.4px;background:#000;"></div>
<div style="left:852px;top:647px;width:125px;height:25px;border:1px dashed #000;"></div>
<div style="left:307px;top:677px;width:934px;height:23.5px;background:#f0f0f0;"></div>
<div class="t" style="left:313px;top:676px;height:21.5px;line-height:21.5px;font-size:13px;font-weight:bold;letter-spacing:0.03px;">Footer<span style="font-weight:normal">:</span></div>
<div class="t" style="left:364.5px;top:676px;height:21.5px;line-height:21.5px;font-size:13px;letter-spacing:-0.33px;">Footer1</div>
<div style="left:307px;top:676.5px;width:935px;height:1px;background:#909090;"></div>
<div style="left:307px;top:673.2px;width:936px;height:3.3px;background:#fff;"></div>
<div style="left:307px;top:677px;width:1px;height:213px;background-image:linear-gradient(180deg,#b0b0b0 60%,transparent 60%);background-size:1px 5px;"></div>
<div class="rt" style="left:1000px;top:702px;font-size:19.1px;line-height:24px;width:241px;text-align:right;overflow:hidden;font-weight:bold;text-decoration:underline;text-decoration-thickness:1.500px;text-underline-offset:2px;text-decoration-skip-ink:none;">[Сума знижки]</div>
<div class="rt" style="left:310.4px;top:737px;font-size:20.8px;line-height:24px;font-weight:bold;">Разом:</div>
<div class="rt" style="left:389.8px;top:737px;font-size:20.8px;line-height:24px;font-weight:bold;font-style:italic;">[Сума рахунку прописом]</div>
<div class="rt" style="left:1018px;top:737px;font-size:20.8px;line-height:24px;font-weight:bold;">Разом:</div>
<div class="rt" style="left:1116px;top:737px;font-size:20.8px;line-height:24px;width:125px;text-align:left;overflow:hidden;font-weight:bold;">[SUM(&lt;Пере</div>
<div class="rt" style="left:309.8px;top:831px;font-size:19.1px;line-height:22px;letter-spacing:0.12px;">[Дата резерву]</div>
<div style="left:498px;top:645px;width:5px;height:3px;background:#1a5fd0;"></div>
<div style="left:498px;top:672px;width:5px;height:3px;background:#000;"></div>
<div style="left:671px;top:645px;width:5px;height:3px;background:#1a5fd0;"></div>
<div style="left:671px;top:672px;width:5px;height:3px;background:#000;"></div>
<div style="left:846px;top:645px;width:5px;height:3px;background:#1a5fd0;"></div>
<div style="left:846px;top:672px;width:5px;height:3px;background:#000;"></div>
<div style="left:499px;top:648px;width:2px;height:24px;background:#000;"></div>
<div style="left:498px;top:656px;width:5px;height:7px;background:#000;border-top:1px solid #fff;border-bottom:1px solid #fff;"></div>
<div style="left:847px;top:648px;width:2px;height:24px;background:#000;"></div>
<div style="left:846px;top:656px;width:5px;height:7px;background:#000;border-top:1px solid #fff;border-bottom:1px solid #fff;"></div>
<svg style="left:0px;top:0px;" width="1562" height="930" viewBox="0 0 1562 930"><g fill="none" stroke="#000" stroke-width="1" shape-rendering="crispEdges"><path d="M307.5 240V235.5H312"/><path d="M794 235.5H798.5V240"/><path d="M307.5 260V264.5H312"/><path d="M794 264.5H798.5V260"/><path d="M801.5 240V235.5H806"/><path d="M801.5 260V264.5H806"/><path d="M1238 235.5h3M1238 264.5h3"/><path d="M313 263.500h5M321 263.500h9" /><path d="M462 263.500h2M466 263.500h2" /><path d="M307.5 284V279.5H312"/><path d="M451 279.5H455.5V284"/><path d="M307.5 299V303.5H312"/><path d="M451 303.5H455.5V299"/><path d="M459.5 284V279.5H464"/><path d="M1232 279.5H1236.5V284"/><path d="M459.5 299V303.5H464"/><path d="M1232 303.5H1236.5V299"/><path d="M307.5 313V308.5H312"/><path d="M451 308.5H455.5V313"/><path d="M307.5 329V333.5H312"/><path d="M451 333.5H455.5V329"/><path d="M459.5 313V308.5H464"/><path d="M1232 308.5H1236.5V313"/><path d="M459.5 329V333.5H464"/><path d="M1232 333.5H1236.5V329"/><path d="M307.5 343V338.5H312"/><path d="M451 338.5H455.5V343"/><path d="M307.5 358V362.5H312"/><path d="M451 362.5H455.5V358"/><path d="M459.5 343V338.5H464"/><path d="M1232 338.5H1236.5V343"/><path d="M459.5 358V362.5H464"/><path d="M1232 362.5H1236.5V358"/><path d="M307.5 373V368.5H312"/><path d="M406 368.5H410.5V373"/><path d="M307.5 388V392.5H312"/><path d="M406 392.5H410.5V388"/><path d="M455.5 373V368.5H460"/><path d="M455.5 416V420.5H460"/><path d="M1232 420.5H1236.5V416"/><path d="M1232 392.5H1236.5V388"/><path d="M307.5 437V432.5H312"/><path d="M451 432.5H455.5V437"/><path d="M307.5 452V456.5H312"/><path d="M451 456.5H455.5V452"/><path d="M459.5 437V432.5H464"/><path d="M1232 432.5H1236.5V437"/><path d="M459.5 452V456.5H464"/><path d="M1232 456.5H1236.5V452"/><path d="M307.5 467V462.5H312"/><path d="M451 462.5H455.5V467"/><path d="M307.5 481V485.5H312"/><path d="M451 485.5H455.5V481"/><path d="M459.5 467V462.5H464"/><path d="M1232 462.5H1236.5V467"/><path d="M459.5 481V485.5H464"/><path d="M1232 485.5H1236.5V481"/><path d="M307.5 706V701.5H312"/><path d="M307.5 739V734.5H312"/><path d="M307.5 761V765.5H312"/><path d="M383 765.5H387.5V761"/><path d="M383 736.5H387.5V741"/><path d="M1006 736.5H1010.5V741"/><path d="M387.5 804V808.5H392"/><path d="M1006 808.5H1010.5V804"/><path d="M1015.5 741V736.5H1020"/><path d="M1094 736.5H1098.5V741"/><path d="M1015.5 761V765.5H1020"/><path d="M1094 765.5H1098.5V761"/><path d="M1103.5 741V736.5H1108"/><path d="M1103.5 761V765.5H1108"/><path d="M1238 736.5h3M1238 765.5h3M1238 829.5h3M1238 873.5h3M1148 765.5h2"/><path d="M307.5 835V830.5H312"/><path d="M307.5 869V873.5H312"/><path d="M307.5 892V887.5H312"/><path d="M794 887.5H798.5V892"/></g></svg>
<svg style="left:0px;top:0px;" width="1562" height="930" viewBox="0 0 1562 930"><path d="M838.400 553.100L885 629" stroke="#fb0d0d" stroke-width="2.800" stroke-linecap="round" fill="none"/><path d="M891.800 640.400L881 632.400L890.200 626.800z" fill="#fb0d0d"/></svg>
<div class="t" style="left:822px;top:529px;height:24px;line-height:24px;color:#fb0d0d;font-size:19.5px;font-family:'DejaVu Sans',sans-serif;letter-spacing:0;transform:scaleX(0.86);transform-origin:0 0;">2</div>
</div></div>
<div style="left:1248px;top:151px;width:18px;height:740px;background:#f0f0f0;"></div>
<svg style="left:1252.5px;top:157px;" width="9" height="6" viewBox="0 0 9 6"><path d="M1.200 5L4.500 1.700L7.800 5" fill="none" stroke="#555" stroke-width="1.800"/></svg>
<svg style="left:1252.5px;top:880px;" width="9" height="6" viewBox="0 0 9 6"><path d="M1.200 1L4.500 4.300L7.800 1" fill="none" stroke="#555" stroke-width="1.800"/></svg>
<div style="left:1249px;top:168px;width:15px;height:337px;background:#cdcdcd;"></div>
<div style="left:248px;top:891px;width:1018px;height:17px;background:#f0f0f0;"></div>
<svg style="left:253px;top:895px;" width="6" height="9" viewBox="0 0 6 9"><path d="M5 1.200L1.700 4.500L5 7.800" fill="none" stroke="#555" stroke-width="1.800"/></svg>
<svg style="left:1237px;top:895px;" width="6" height="9" viewBox="0 0 6 9"><path d="M1 1.200L4.300 4.500L1 7.800" fill="none" stroke="#555" stroke-width="1.800"/></svg>
<div style="left:265px;top:892px;width:918px;height:15px;background:#cdcdcd;"></div>
<div style="left:1266px;top:504px;width:6px;height:29px;background:#d8d8cc;"></div>
<svg style="left:1268px;top:509px;" width="3" height="21" viewBox="0 0 3 21"><rect x="0" y="0" width="1" height="1" fill="#fff"/><rect x="1" y="1" width="1" height="1" fill="#9a9a8a"/><rect x="0" y="3" width="1" height="1" fill="#fff"/><rect x="1" y="4" width="1" height="1" fill="#9a9a8a"/><rect x="0" y="6" width="1" height="1" fill="#fff"/><rect x="1" y="7" width="1" height="1" fill="#9a9a8a"/><rect x="0" y="9" width="1" height="1" fill="#fff"/><rect x="1" y="10" width="1" height="1" fill="#9a9a8a"/><rect x="0" y="12" width="1" height="1" fill="#fff"/><rect x="1" y="13" width="1" height="1" fill="#9a9a8a"/><rect x="0" y="15" width="1" height="1" fill="#fff"/><rect x="1" y="16" width="1" height="1" fill="#9a9a8a"/><rect x="0" y="18" width="1" height="1" fill="#fff"/><rect x="1" y="19" width="1" height="1" fill="#9a9a8a"/></svg>
<svg style="left:1274px;top:130px;" width="275" height="9" viewBox="0 0 275 9"><rect x="1" y="2.5" width="2" height="1.500" fill="#fff"/><rect x="1" y="1" width="2" height="2" fill="#b2b2b2"/><rect x="6" y="2.5" width="2" height="1.500" fill="#fff"/><rect x="6" y="1" width="2" height="2" fill="#b2b2b2"/><rect x="11" y="2.5" width="2" height="1.500" fill="#fff"/><rect x="11" y="1" width="2" height="2" fill="#b2b2b2"/><rect x="16" y="2.5" width="2" height="1.500" fill="#fff"/><rect x="16" y="1" width="2" height="2" fill="#b2b2b2"/><rect x="21" y="2.5" width="2" height="1.500" fill="#fff"/><rect x="21" y="1" width="2" height="2" fill="#b2b2b2"/><rect x="26" y="2.5" width="2" height="1.500" fill="#fff"/><rect x="26" y="1" width="2" height="2" fill="#b2b2b2"/><rect x="31" y="2.5" width="2" height="1.500" fill="#fff"/><rect x="31" y="1" width="2" height="2" fill="#b2b2b2"/><rect x="36" y="2.5" width="2" height="1.500" fill="#fff"/><rect x="36" y="1" width="2" height="2" fill="#b2b2b2"/><rect x="41" y="2.5" width="2" height="1.500" fill="#fff"/><rect x="41" y="1" width="2" height="2" fill="#b2b2b2"/><rect x="46" y="2.5" width="2" height="1.500" fill="#fff"/><rect x="46" y="1" width="2" height="2" fill="#b2b2b2"/><rect x="51" y="2.5" width="2" height="1.500" fill="#fff"/><rect x="51" y="1" width="2" height="2" fill="#b2b2b2"/><rect x="56" y="2.5" width="2" height="1.500" fill="#fff"/><rect x="56" y="1" width="2" height="2" fill="#b2b2b2"/><rect x="61" y="2.5" width="2" height="1.500" fill="#fff"/><rect x="61" y="1" width="2" height="2" fill="#b2b2b2"/><rect x="66" y="2.5" width="2" height="1.500" fill="#fff"/><rect x="66" y="1" width="2" height="2" fill="#b2b2b2"/><rect x="71" y="2.5" width="2" height="1.500" fill="#fff"/><rect x="71" y="1" width="2" height="2" fill="#b2b2b2"/><rect x="76" y="2.5" width="2" height="1.500" fill="#fff"/><rect x="76" y="1" width="2" height="2" fill="#b2b2b2"/><rect x="81" y="2.5" width="2" height="1.500" fill="#fff"/><rect x="81" y="1" width="2" height="2" fill="#b2b2b2"/><rect x="86" y="2.5" width="2" height="1.500" fill="#fff"/><rect x="86" y="1" width="2" height="2" fill="#b2b2b2"/><rect x="91" y="2.5" width="2" height="1.500" fill="#fff"/><rect x="91" y="1" width="2" height="2" fill="#b2b2b2"/><rect x="96" y="2.5" width="2" height="1.500" fill="#fff"/><rect x="96" y="1" width="2" height="2" fill="#b2b2b2"/><rect x="101" y="2.5" width="2" height="1.500" fill="#fff"/><rect x="101" y="1" width="2" height="2" fill="#b2b2b2"/><rect x="106" y="2.5" width="2" height="1.500" fill="#fff"/><rect x="106" y="1" width="2" height="2" fill="#b2b2b2"/><rect x="111" y="2.5" width="2" height="1.500" fill="#fff"/><rect x="111" y="1" width="2" height="2" fill="#b2b2b2"/><rect x="116" y="2.5" width="2" height="1.500" fill="#fff"/><rect x="116" y="1" width="2" height="2" fill="#b2b2b2"/><rect x="121" y="2.5" width="2" height="1.500" fill="#fff"/><rect x="121" y="1" width="2" height="2" fill="#b2b2b2"/><rect x="126" y="2.5" width="2" height="1.500" fill="#fff"/><rect x="126" y="1" width="2" height="2" fill="#b2b2b2"/><rect x="131" y="2.5" width="2" height="1.500" fill="#fff"/><rect x="131" y="1" width="2" height="2" fill="#b2b2b2"/><rect x="136" y="2.5" width="2" height="1.500" fill="#fff"/><rect x="136" y="1" width="2" height="2" fill="#b2b2b2"/><rect x="141" y="2.5" width="2" height="1.500" fill="#fff"/><rect x="141" y="1" width="2" height="2" fill="#b2b2b2"/><rect x="146" y="2.5" width="2" height="1.500" fill="#fff"/><rect x="146" y="1" width="2" height="2" fill="#b2b2b2"/><rect x="151" y="2.5" width="2" height="1.500" fill="#fff"/><rect x="151" y="1" width="2" height="2" fill="#b2b2b2"/><rect x="156" y="2.5" width="2" height="1.500" fill="#fff"/><rect x="156" y="1" width="2" height="2" fill="#b2b2b2"/><rect x="161" y="2.5" width="2" height="1.500" fill="#fff"/><rect x="161" y="1" width="2" height="2" fill="#b2b2b2"/><rect x="166" y="2.5" width="2" height="1.500" fill="#fff"/><rect x="166" y="1" width="2" height="2" fill="#b2b2b2"/><rect x="171" y="2.5" width="2" height="1.500" fill="#fff"/><rect x="171" y="1" width="2" height="2" fill="#b2b2b2"/><rect x="176" y="2.5" width="2" height="1.500" fill="#fff"/><rect x="176" y="1" width="2" height="2" fill="#b2b2b2"/><rect x="181" y="2.5" width="2" height="1.500" fill="#fff"/><rect x="181" y="1" width="2" height="2" fill="#b2b2b2"/><rect x="186" y="2.5" width="2" height="1.500" fill="#fff"/><rect x="186" y="1" width="2" height="2" fill="#b2b2b2"/><rect x="191" y="2.5" width="2" height="1.500" fill="#fff"/><rect x="191" y="1" width="2" height="2" fill="#b2b2b2"/><rect x="196" y="2.5" width="2" height="1.500" fill="#fff"/><rect x="196" y="1" width="2" height="2" fill="#b2b2b2"/><rect x="201" y="2.5" width="2" height="1.500" fill="#fff"/><rect x="201" y="1" width="2" height="2" fill="#b2b2b2"/><rect x="206" y="2.5" width="2" height="1.500" fill="#fff"/><rect x="206" y="1" width="2" height="2" fill="#b2b2b2"/><rect x="211" y="2.5" width="2" height="1.500" fill="#fff"/><rect x="211" y="1" width="2" height="2" fill="#b2b2b2"/><rect x="216" y="2.5" width="2" height="1.500" fill="#fff"/><rect x="216" y="1" width="2" height="2" fill="#b2b2b2"/><rect x="221" y="2.5" width="2" height="1.500" fill="#fff"/><rect x="221" y="1" width="2" height="2" fill="#b2b2b2"/><rect x="226" y="2.5" width="2" height="1.500" fill="#fff"/><rect x="226" y="1" width="2" height="2" fill="#b2b2b2"/><rect x="231" y="2.5" width="2" height="1.500" fill="#fff"/><rect x="231" y="1" width="2" height="2" fill="#b2b2b2"/><rect x="236" y="2.5" width="2" height="1.500" fill="#fff"/><rect x="236" y="1" width="2" height="2" fill="#b2b2b2"/><rect x="241" y="2.5" width="2" height="1.500" fill="#fff"/><rect x="241" y="1" width="2" height="2" fill="#b2b2b2"/><rect x="246" y="2.5" width="2" height="1.500" fill="#fff"/><rect x="246" y="1" width="2" height="2" fill="#b2b2b2"/><rect x="251" y="2.5" width="2" height="1.500" fill="#fff"/><rect x="251" y="1" width="2" height="2" fill="#b2b2b2"/><rect x="256" y="2.5" width="2" height="1.500" fill="#fff"/><rect x="256" y="1" width="2" height="2" fill="#b2b2b2"/><rect x="261" y="2.5" width="2" height="1.500" fill="#fff"/><rect x="261" y="1" width="2" height="2" fill="#b2b2b2"/><rect x="266" y="2.5" width="2" height="1.500" fill="#fff"/><rect x="266" y="1" width="2" height="2" fill="#b2b2b2"/><rect x="271" y="2.5" width="2" height="1.500" fill="#fff"/><rect x="271" y="1" width="2" height="2" fill="#b2b2b2"/><rect x="1" y="6.5" width="2" height="1.500" fill="#fff"/><rect x="1" y="5" width="2" height="2" fill="#b2b2b2"/><rect x="6" y="6.5" width="2" height="1.500" fill="#fff"/><rect x="6" y="5" width="2" height="2" fill="#b2b2b2"/><rect x="11" y="6.5" width="2" height="1.500" fill="#fff"/><rect x="11" y="5" width="2" height="2" fill="#b2b2b2"/><rect x="16" y="6.5" width="2" height="1.500" fill="#fff"/><rect x="16" y="5" width="2" height="2" fill="#b2b2b2"/><rect x="21" y="6.5" width="2" height="1.500" fill="#fff"/><rect x="21" y="5" width="2" height="2" fill="#b2b2b2"/><rect x="26" y="6.5" width="2" height="1.500" fill="#fff"/><rect x="26" y="5" width="2" height="2" fill="#b2b2b2"/><rect x="31" y="6.5" width="2" height="1.500" fill="#fff"/><rect x="31" y="5" width="2" height="2" fill="#b2b2b2"/><rect x="36" y="6.5" width="2" height="1.500" fill="#fff"/><rect x="36" y="5" width="2" height="2" fill="#b2b2b2"/><rect x="41" y="6.5" width="2" height="1.500" fill="#fff"/><rect x="41" y="5" width="2" height="2" fill="#b2b2b2"/><rect x="46" y="6.5" width="2" height="1.500" fill="#fff"/><rect x="46" y="5" width="2" height="2" fill="#b2b2b2"/><rect x="51" y="6.5" width="2" height="1.500" fill="#fff"/><rect x="51" y="5" width="2" height="2" fill="#b2b2b2"/><rect x="56" y="6.5" width="2" height="1.500" fill="#fff"/><rect x="56" y="5" width="2" height="2" fill="#b2b2b2"/><rect x="61" y="6.5" width="2" height="1.500" fill="#fff"/><rect x="61" y="5" width="2" height="2" fill="#b2b2b2"/><rect x="66" y="6.5" width="2" height="1.500" fill="#fff"/><rect x="66" y="5" width="2" height="2" fill="#b2b2b2"/><rect x="71" y="6.5" width="2" height="1.500" fill="#fff"/><rect x="71" y="5" width="2" height="2" fill="#b2b2b2"/><rect x="76" y="6.5" width="2" height="1.500" fill="#fff"/><rect x="76" y="5" width="2" height="2" fill="#b2b2b2"/><rect x="81" y="6.5" width="2" height="1.500" fill="#fff"/><rect x="81" y="5" width="2" height="2" fill="#b2b2b2"/><rect x="86" y="6.5" width="2" height="1.500" fill="#fff"/><rect x="86" y="5" width="2" height="2" fill="#b2b2b2"/><rect x="91" y="6.5" width="2" height="1.500" fill="#fff"/><rect x="91" y="5" width="2" height="2" fill="#b2b2b2"/><rect x="96" y="6.5" width="2" height="1.500" fill="#fff"/><rect x="96" y="5" width="2" height="2" fill="#b2b2b2"/><rect x="101" y="6.5" width="2" height="1.500" fill="#fff"/><rect x="101" y="5" width="2" height="2" fill="#b2b2b2"/><rect x="106" y="6.5" width="2" height="1.500" fill="#fff"/><rect x="106" y="5" width="2" height="2" fill="#b2b2b2"/><rect x="111" y="6.5" width="2" height="1.500" fill="#fff"/><rect x="111" y="5" width="2" height="2" fill="#b2b2b2"/><rect x="116" y="6.5" width="2" height="1.500" fill="#fff"/><rect x="116" y="5" width="2" height="2" fill="#b2b2b2"/><rect x="121" y="6.5" width="2" height="1.500" fill="#fff"/><rect x="121" y="5" width="2" height="2" fill="#b2b2b2"/><rect x="126" y="6.5" width="2" height="1.500" fill="#fff"/><rect x="126" y="5" width="2" height="2" fill="#b2b2b2"/><rect x="131" y="6.5" width="2" height="1.500" fill="#fff"/><rect x="131" y="5" width="2" height="2" fill="#b2b2b2"/><rect x="136" y="6.5" width="2" height="1.500" fill="#fff"/><rect x="136" y="5" width="2" height="2" fill="#b2b2b2"/><rect x="141" y="6.5" width="2" height="1.500" fill="#fff"/><rect x="141" y="5" width="2" height="2" fill="#b2b2b2"/><rect x="146" y="6.5" width="2" height="1.500" fill="#fff"/><rect x="146" y="5" width="2" height="2" fill="#b2b2b2"/><rect x="151" y="6.5" width="2" height="1.500" fill="#fff"/><rect x="151" y="5" width="2" height="2" fill="#b2b2b2"/><rect x="156" y="6.5" width="2" height="1.500" fill="#fff"/><rect x="156" y="5" width="2" height="2" fill="#b2b2b2"/><rect x="161" y="6.5" width="2" height="1.500" fill="#fff"/><rect x="161" y="5" width="2" height="2" fill="#b2b2b2"/><rect x="166" y="6.5" width="2" height="1.500" fill="#fff"/><rect x="166" y="5" width="2" height="2" fill="#b2b2b2"/><rect x="171" y="6.5" width="2" height="1.500" fill="#fff"/><rect x="171" y="5" width="2" height="2" fill="#b2b2b2"/><rect x="176" y="6.5" width="2" height="1.500" fill="#fff"/><rect x="176" y="5" width="2" height="2" fill="#b2b2b2"/><rect x="181" y="6.5" width="2" height="1.500" fill="#fff"/><rect x="181" y="5" width="2" height="2" fill="#b2b2b2"/><rect x="186" y="6.5" width="2" height="1.500" fill="#fff"/><rect x="186" y="5" width="2" height="2" fill="#b2b2b2"/><rect x="191" y="6.5" width="2" height="1.500" fill="#fff"/><rect x="191" y="5" width="2" height="2" fill="#b2b2b2"/><rect x="196" y="6.5" width="2" height="1.500" fill="#fff"/><rect x="196" y="5" width="2" height="2" fill="#b2b2b2"/><rect x="201" y="6.5" width="2" height="1.500" fill="#fff"/><rect x="201" y="5" width="2" height="2" fill="#b2b2b2"/><rect x="206" y="6.5" width="2" height="1.500" fill="#fff"/><rect x="206" y="5" width="2" height="2" fill="#b2b2b2"/><rect x="211" y="6.5" width="2" height="1.500" fill="#fff"/><rect x="211" y="5" width="2" height="2" fill="#b2b2b2"/><rect x="216" y="6.5" width="2" height="1.500" fill="#fff"/><rect x="216" y="5" width="2" height="2" fill="#b2b2b2"/><rect x="221" y="6.5" width="2" height="1.500" fill="#fff"/><rect x="221" y="5" width="2" height="2" fill="#b2b2b2"/><rect x="226" y="6.5" width="2" height="1.500" fill="#fff"/><rect x="226" y="5" width="2" height="2" fill="#b2b2b2"/><rect x="231" y="6.5" width="2" height="1.500" fill="#fff"/><rect x="231" y="5" width="2" height="2" fill="#b2b2b2"/><rect x="236" y="6.5" width="2" height="1.500" fill="#fff"/><rect x="236" y="5" width="2" height="2" fill="#b2b2b2"/><rect x="241" y="6.5" width="2" height="1.500" fill="#fff"/><rect x="241" y="5" width="2" height="2" fill="#b2b2b2"/><rect x="246" y="6.5" width="2" height="1.500" fill="#fff"/><rect x="246" y="5" width="2" height="2" fill="#b2b2b2"/><rect x="251" y="6.5" width="2" height="1.500" fill="#fff"/><rect x="251" y="5" width="2" height="2" fill="#b2b2b2"/><rect x="256" y="6.5" width="2" height="1.500" fill="#fff"/><rect x="256" y="5" width="2" height="2" fill="#b2b2b2"/><rect x="261" y="6.5" width="2" height="1.500" fill="#fff"/><rect x="261" y="5" width="2" height="2" fill="#b2b2b2"/><rect x="266" y="6.5" width="2" height="1.500" fill="#fff"/><rect x="266" y="5" width="2" height="2" fill="#b2b2b2"/><rect x="271" y="6.5" width="2" height="1.500" fill="#fff"/><rect x="271" y="5" width="2" height="2" fill="#b2b2b2"/></svg>
<svg style="left:1551px;top:129.5px;" width="10" height="10" viewBox="0 0 11 11"><rect x="0.700" y="0.700" width="9.600" height="9.600" rx="1.500" fill="#f6ded8" stroke="#5a1828" stroke-width="1.400"/><path d="M1.500 1.500h8l-4 4z" fill="#f0937c"/><path d="M1.500 1.500v8l4-4z" fill="#f0937c"/><path d="M2.500 3l6 6.500M8.500 3l-6 6.500" stroke="#2a2a4a" stroke-width="2.600"/><path d="M2.500 3l6 6.500M8.500 3l-6 6.500" stroke="#fff" stroke-width="1.500"/></svg>
<div class="dot" style="left:1271px;top:141px;width:290px;height:22px;"></div>
<svg style="left:1277px;top:146px;" width="59" height="18" viewBox="0 0 59 18"><path d="M1.5 18L6.5 1.500Q7 0.500 8.5 0.500L51.5 0.500Q53 0.500 53.5 1.500L57.5 18" fill="#f0f0f0" stroke="#8c8c8c" stroke-width="1"/></svg>
<div class="t" style="left:1284px;top:147px;height:17px;line-height:17px;letter-spacing:0px;">Поля БД</div>
<svg style="left:1333px;top:146px;" width="41" height="17" viewBox="0 0 41 17"><path d="M1.5 17L3.5 1.500Q4 0.500 5.5 0.500L33.5 0.500Q35 0.500 35.5 1.500L39.5 17" fill="#fff" stroke="#8c8c8c" stroke-width="1"/></svg>
<div class="t" style="left:1337px;top:147px;height:17px;line-height:17px;letter-spacing:0px;">Змінні</div>
<svg style="left:1371px;top:146px;" width="48" height="17" viewBox="0 0 48 17"><path d="M1.5 17L3.5 1.500Q4 0.500 5.5 0.500L40.5 0.500Q42 0.500 42.5 1.500L46.5 17" fill="#fff" stroke="#8c8c8c" stroke-width="1"/></svg>
<div class="t" style="left:1375px;top:147px;height:17px;line-height:17px;letter-spacing:0px;">Функції</div>
<svg style="left:1416px;top:146px;" width="43" height="17" viewBox="0 0 43 17"><path d="M1.5 17L3.5 1.500Q4 0.500 5.5 0.500L35.5 0.500Q37 0.500 37.5 1.500L41.5 17" fill="#fff" stroke="#8c8c8c" stroke-width="1"/></svg>
<div class="t" style="left:1421px;top:147px;height:17px;line-height:17px;letter-spacing:0px;">Класи</div>
<div style="left:1271px;top:162px;width:290px;height:692px;background:#fff;border:1px solid #999;border-right:none;"></div>
<svg style="left:1278px;top:165px;" width="12" height="14" viewBox="0 0 12 14"><path d="M0.5 2.5v9a5.5 2 0 0 0 11 0v-9z" fill="#eec142" stroke="#b98b1a"/><ellipse cx="6" cy="2.5" rx="5.5" ry="2" fill="#fdf0b0" stroke="#b98b1a"/><rect x="2" y="5" width="2" height="7" fill="#fff3c0" opacity="0.8"/></svg>
<div class="t b" style="left:1297px;top:164px;height:16px;line-height:16px;">Дані</div>
<svg style="left:1279px;top:185px;" width="11" height="7" viewBox="0 0 11 7"><path d="M1 1L5.500 5.500L10 1" fill="none" stroke="#404040" stroke-width="1.700"/></svg>
<div style="left:1291px;top:188px;width:4px;height:1px;background-image:linear-gradient(90deg,#808080 50%,transparent 50%);background-size:2px 1px;"></div>
<svg style="left:1295px;top:181px;" width="12" height="14" viewBox="0 0 12 14"><path d="M0.5 2.5v9a5.5 2 0 0 0 11 0v-9z" fill="#eec142" stroke="#b98b1a"/><ellipse cx="6" cy="2.5" rx="5.5" ry="2" fill="#fdf0b0" stroke="#b98b1a"/><rect x="2" y="5" width="2" height="7" fill="#fff3c0" opacity="0.8"/></svg>
<svg style="left:1299px;top:185px;" width="13" height="11" viewBox="0 0 13 11"><rect x="3.5" y="0.5" width="9" height="7" fill="#dfe9f7" stroke="#3a57a6"/><rect x="4" y="1" width="8" height="2" fill="#6f8fd8"/><rect x="0.5" y="3.5" width="9" height="7" fill="#fff" stroke="#3a57a6"/><rect x="1" y="4" width="8" height="2" fill="#6f8fd8"/><path d="M2 8h2M5.5 8h2" stroke="#555"/></svg>
<div class="t b" style="left:1316px;top:180px;height:16px;line-height:16px;letter-spacing:0.62px;">Перелік товару рахунку</div>
<div style="left:1303px;top:196px;width:1px;height:185px;background-image:linear-gradient(180deg,#808080 50%,transparent 50%);background-size:1px 2px;"></div>
<div style="left:1304px;top:204px;width:10px;height:1px;background-image:linear-gradient(90deg,#808080 50%,transparent 50%);background-size:2px 1px;"></div>
<svg style="left:1317px;top:196px;" width="12" height="13" viewBox="0 0 12 13"><rect x="0.500" y="0.500" width="11" height="12" fill="#fff" stroke="#3a57a6"/><rect x="1" y="1" width="10" height="2.500" fill="#7f9fe4"/><path d="M11 3.500v8.500h-9" stroke="#1a2a6a" fill="none" opacity="0.500"/><path d="M3.500 4.500h5M3.500 6.500h5M3.500 8.500h5M3.500 10.500h5" stroke="#555" stroke-width="1" shape-rendering="crispEdges"/></svg>
<div class="t" style="left:1334px;top:196px;height:16px;line-height:16px;letter-spacing:0.05px;">Товар</div>
<div style="left:1304px;top:220px;width:10px;height:1px;background-image:linear-gradient(90deg,#808080 50%,transparent 50%);background-size:2px 1px;"></div>
<svg style="left:1317px;top:212px;" width="12" height="13" viewBox="0 0 12 13"><rect x="0.500" y="0.500" width="11" height="12" fill="#fff" stroke="#3a57a6"/><rect x="1" y="1" width="10" height="2.500" fill="#7f9fe4"/><path d="M11 3.500v8.500h-9" stroke="#1a2a6a" fill="none" opacity="0.500"/><path d="M3.500 4.500h5M3.500 6.500h5M3.500 8.500h5M3.500 10.500h5" stroke="#555" stroke-width="1" shape-rendering="crispEdges"/></svg>
<div class="t" style="left:1334px;top:212px;height:16px;line-height:16px;letter-spacing:0.05px;">Ціна</div>
<div style="left:1304px;top:236px;width:10px;height:1px;background-image:linear-gradient(90deg,#808080 50%,transparent 50%);background-size:2px 1px;"></div>
<svg style="left:1317px;top:228px;" width="12" height="13" viewBox="0 0 12 13"><rect x="0.500" y="0.500" width="11" height="12" fill="#fff" stroke="#3a57a6"/><rect x="1" y="1" width="10" height="2.500" fill="#7f9fe4"/><path d="M11 3.500v8.500h-9" stroke="#1a2a6a" fill="none" opacity="0.500"/><path d="M3.500 4.500h5M3.500 6.500h5M3.500 8.500h5M3.500 10.500h5" stroke="#555" stroke-width="1" shape-rendering="crispEdges"/></svg>
<div class="t" style="left:1334px;top:228px;height:16px;line-height:16px;letter-spacing:0.05px;">Сума</div>
<div style="left:1304px;top:252px;width:10px;height:1px;background-image:linear-gradient(90deg,#808080 50%,transparent 50%);background-size:2px 1px;"></div>
<svg style="left:1317px;top:244px;" width="12" height="13" viewBox="0 0 12 13"><rect x="0.500" y="0.500" width="11" height="12" fill="#fff" stroke="#3a57a6"/><rect x="1" y="1" width="10" height="2.500" fill="#7f9fe4"/><path d="M11 3.500v8.500h-9" stroke="#1a2a6a" fill="none" opacity="0.500"/><path d="M3.500 4.500h5M3.500 6.500h5M3.500 8.500h5M3.500 10.500h5" stroke="#555" stroke-width="1" shape-rendering="crispEdges"/></svg>
<div class="t" style="left:1334px;top:244px;height:16px;line-height:16px;letter-spacing:0.05px;">Кількість</div>
<div style="left:1304px;top:268px;width:10px;height:1px;background-image:linear-gradient(90deg,#808080 50%,transparent 50%);background-size:2px 1px;"></div>
<svg style="left:1317px;top:260px;" width="12" height="13" viewBox="0 0 12 13"><rect x="0.500" y="0.500" width="11" height="12" fill="#fff" stroke="#3a57a6"/><rect x="1" y="1" width="10" height="2.500" fill="#7f9fe4"/><path d="M11 3.500v8.500h-9" stroke="#1a2a6a" fill="none" opacity="0.500"/><path d="M3.500 4.500h5M3.500 6.500h5M3.500 8.500h5M3.500 10.500h5" stroke="#555" stroke-width="1" shape-rendering="crispEdges"/></svg>
<div class="t" style="left:1334px;top:260px;height:16px;line-height:16px;letter-spacing:0.05px;">Код</div>
<div style="left:1304px;top:284px;width:10px;height:1px;background-image:linear-gradient(90deg,#808080 50%,transparent 50%);background-size:2px 1px;"></div>
<svg style="left:1317px;top:276px;" width="12" height="13" viewBox="0 0 12 13"><rect x="0.500" y="0.500" width="11" height="12" fill="#fff" stroke="#3a57a6"/><rect x="1" y="1" width="10" height="2.500" fill="#7f9fe4"/><path d="M11 3.500v8.500h-9" stroke="#1a2a6a" fill="none" opacity="0.500"/><path d="M3.500 4.500h5M3.500 6.500h5M3.500 8.500h5M3.500 10.500h5" stroke="#555" stroke-width="1" shape-rendering="crispEdges"/></svg>
<div class="t" style="left:1334px;top:276px;height:16px;line-height:16px;letter-spacing:0.05px;">Артикул</div>
<div style="left:1304px;top:300px;width:10px;height:1px;background-image:linear-gradient(90deg,#808080 50%,transparent 50%);background-size:2px 1px;"></div>
<svg style="left:1317px;top:292px;" width="12" height="13" viewBox="0 0 12 13"><rect x="0.500" y="0.500" width="11" height="12" fill="#fff" stroke="#3a57a6"/><rect x="1" y="1" width="10" height="2.500" fill="#7f9fe4"/><path d="M11 3.500v8.500h-9" stroke="#1a2a6a" fill="none" opacity="0.500"/><path d="M3.500 4.500h5M3.500 6.500h5M3.500 8.500h5M3.500 10.500h5" stroke="#555" stroke-width="1" shape-rendering="crispEdges"/></svg>
<div class="t" style="left:1334px;top:292px;height:16px;line-height:16px;letter-spacing:0.05px;">Ціна прайсу</div>
<div style="left:1304px;top:316px;width:10px;height:1px;background-image:linear-gradient(90deg,#808080 50%,transparent 50%);background-size:2px 1px;"></div>
<svg style="left:1317px;top:308px;" width="12" height="13" viewBox="0 0 12 13"><rect x="0.500" y="0.500" width="11" height="12" fill="#fff" stroke="#3a57a6"/><rect x="1" y="1" width="10" height="2.500" fill="#7f9fe4"/><path d="M11 3.500v8.500h-9" stroke="#1a2a6a" fill="none" opacity="0.500"/><path d="M3.500 4.500h5M3.500 6.500h5M3.500 8.500h5M3.500 10.500h5" stroke="#555" stroke-width="1" shape-rendering="crispEdges"/></svg>
<div class="t" style="left:1334px;top:308px;height:16px;line-height:16px;letter-spacing:0.05px;">Вид товару</div>
<div style="left:1304px;top:332px;width:10px;height:1px;background-image:linear-gradient(90deg,#808080 50%,transparent 50%);background-size:2px 1px;"></div>
<svg style="left:1317px;top:324px;" width="12" height="13" viewBox="0 0 12 13"><rect x="0.500" y="0.500" width="11" height="12" fill="#fff" stroke="#3a57a6"/><rect x="1" y="1" width="10" height="2.500" fill="#7f9fe4"/><path d="M11 3.500v8.500h-9" stroke="#1a2a6a" fill="none" opacity="0.500"/><path d="M3.500 4.500h5M3.500 6.500h5M3.500 8.500h5M3.500 10.500h5" stroke="#555" stroke-width="1" shape-rendering="crispEdges"/></svg>
<div class="t" style="left:1334px;top:324px;height:16px;line-height:16px;letter-spacing:0.05px;">Група товару</div>
<div style="left:1304px;top:348px;width:10px;height:1px;background-image:linear-gradient(90deg,#808080 50%,transparent 50%);background-size:2px 1px;"></div>
<svg style="left:1317px;top:340px;" width="12" height="13" viewBox="0 0 12 13"><rect x="0.500" y="0.500" width="11" height="12" fill="#fff" stroke="#3a57a6"/><rect x="1" y="1" width="10" height="2.500" fill="#7f9fe4"/><path d="M11 3.500v8.500h-9" stroke="#1a2a6a" fill="none" opacity="0.500"/><path d="M3.500 4.500h5M3.500 6.500h5M3.500 8.500h5M3.500 10.500h5" stroke="#555" stroke-width="1" shape-rendering="crispEdges"/></svg>
<div class="t" style="left:1334px;top:340px;height:16px;line-height:16px;letter-spacing:0.05px;">HID групи товару</div>
<div style="left:1304px;top:364px;width:10px;height:1px;background-image:linear-gradient(90deg,#808080 50%,transparent 50%);background-size:2px 1px;"></div>
<svg style="left:1317px;top:356px;" width="12" height="13" viewBox="0 0 12 13"><rect x="0.500" y="0.500" width="11" height="12" fill="#fff" stroke="#3a57a6"/><rect x="1" y="1" width="10" height="2.500" fill="#7f9fe4"/><path d="M11 3.500v8.500h-9" stroke="#1a2a6a" fill="none" opacity="0.500"/><path d="M3.500 4.500h5M3.500 6.500h5M3.500 8.500h5M3.500 10.500h5" stroke="#555" stroke-width="1" shape-rendering="crispEdges"/></svg>
<div class="t" style="left:1334px;top:356px;height:16px;line-height:16px;letter-spacing:0.05px;">Одиниця виміру</div>
<div style="left:1304px;top:380px;width:10px;height:1px;background-image:linear-gradient(90deg,#808080 50%,transparent 50%);background-size:2px 1px;"></div>
<svg style="left:1317px;top:372px;" width="12" height="13" viewBox="0 0 12 13"><rect x="0.500" y="0.500" width="11" height="12" fill="#fff" stroke="#3a57a6"/><rect x="1" y="1" width="10" height="2.500" fill="#7f9fe4"/><path d="M11 3.500v8.500h-9" stroke="#1a2a6a" fill="none" opacity="0.500"/><path d="M3.500 4.500h5M3.500 6.500h5M3.500 8.500h5M3.500 10.500h5" stroke="#555" stroke-width="1" shape-rendering="crispEdges"/></svg>
<div class="t" style="left:1334px;top:372px;height:16px;line-height:16px;letter-spacing:0.05px;">Фото</div>
<svg style="left:1271px;top:861px;" width="13" height="13" viewBox="0 0 13 13"><rect x="0.5" y="0.5" width="12" height="12" fill="#fff" stroke="#333"/><path d="M2.5 6.5l3 3 5-6" fill="none" stroke="#222" stroke-width="1.2"/></svg>
<div class="t" style="left:1286px;top:860px;height:16px;line-height:16px;letter-spacing:0.1px;">Вставляти поле</div>
<svg style="left:1271px;top:877px;" width="13" height="13" viewBox="0 0 13 13"><rect x="0.5" y="0.5" width="12" height="12" fill="#fff" stroke="#333"/></svg>
<div class="t" style="left:1286px;top:876px;height:16px;line-height:16px;letter-spacing:0.1px;">Вставляти заголовок</div>
<svg style="left:1271px;top:893px;" width="13" height="13" viewBox="0 0 13 13"><rect x="0.5" y="0.5" width="12" height="12" fill="#fff" stroke="#333"/></svg>
<div class="t" style="left:1286px;top:892px;height:16px;line-height:16px;letter-spacing:0.1px;">Сортировать по имени</div>
<svg style="left:86px;top:56px;" width="16" height="16" viewBox="0 0 16 16"><path d="M2.5 1.5h7l3.5 3.5v9.5h-10.5z" fill="#fff" stroke="#5a6a9a"/><path d="M9.5 1.5v3.5h3.5" fill="#dfe6f5" stroke="#5a6a9a"/><path d="M12.5 6v8.5h-9" fill="none" stroke="#2a3a6a" /></svg>
<svg style="left:109px;top:56px;" width="16" height="16" viewBox="0 0 16 16"><path d="M1.5 4.5h4l1.5 1.5h6v7.5h-11.5z" fill="#e8b84a" stroke="#9a6a14"/><path d="M3.5 8.5h11.5l-2.5 5h-11z" fill="#fbd978" stroke="#9a6a14"/><path d="M9 3.5q3-3 5.5 0" fill="none" stroke="#3a62b8" stroke-width="1.2"/><path d="M15.5 1.5v3h-3z" fill="#3a62b8"/></svg>
<svg style="left:132px;top:56px;" width="16" height="16" viewBox="0 0 16 16"><rect x="1.5" y="1.5" width="13" height="13" fill="#5a50c8" stroke="#2c2890"/><rect x="4" y="2" width="8" height="5.5" fill="#fff"/><rect x="4" y="10" width="8" height="4.5" fill="#c8c8d8"/><rect x="5" y="11" width="3" height="3.5" fill="#222"/></svg>
<svg style="left:155px;top:56px;" width="16" height="16" viewBox="0 0 16 16"><path d="M1.5 0.5h7l2.5 2.5v10.5h-9.5z" fill="#fff" stroke="#6a78a8"/><circle cx="9" cy="8" r="3.5" fill="#dceeff" stroke="#7a7a7a" stroke-width="1.3"/><path d="M11.5 10.5l3.5 3.5" stroke="#d98a1a" stroke-width="2.4"/></svg>
<div style="left:177px;top:55px;width:1px;height:19px;background:#8f8f8f;"></div>
<svg style="left:185px;top:56px;" width="16" height="17" viewBox="0 0 16 17"><path d="M4.5 2.5h6l3 3v10h-9z" fill="#fff" stroke="#4a62a8"/><path d="M6 7.5h6M6 9.5h6M6 11.5h6M6 13.5h6" stroke="#4a7ad8"/><g transform="translate(0,0)"><g stroke="#f0b400" stroke-width="1.2"><path d="M4 0v8M0 4h8M1.2 1.2l5.6 5.6M6.8 1.2l-5.6 5.6"/></g><rect x="3" y="3" width="2" height="2" fill="#fff6a0"/></g></svg>
<svg style="left:209px;top:56px;" width="17" height="17" viewBox="0 0 17 17"><rect x="3.5" y="2.5" width="12" height="13" fill="#f4ecc8" stroke="#3a57a6"/><rect x="4" y="3" width="11" height="2.5" fill="#3a6ad8"/><rect x="8.5" y="7.5" width="5" height="2" fill="#fff" stroke="#4a6ab8"/><rect x="8.5" y="11.5" width="5" height="2" fill="#fff" stroke="#4a6ab8"/><path d="M5 8.5h2M5 12.5h2" stroke="#3a57a6"/><g><g stroke="#f0b400" stroke-width="1.2"><path d="M4 0v8M0 4h8M1.2 1.2l5.6 5.6M6.8 1.2l-5.6 5.6"/></g><rect x="3" y="3" width="2" height="2" fill="#fff6a0"/></g></svg>
<svg style="left:232px;top:56px;" width="16" height="17" viewBox="0 0 16 17"><path d="M4.5 3.5h6l3 3v9h-9z" fill="#e4e4e4" stroke="#b4b4b4"/><path d="M6 9.5h6M6 11.5h6M6 13.5h6" stroke="#c0c0c0"/><path d="M2 1l9 9M9 2l-6 6" stroke="#bcbcbc" stroke-width="1.3"/></svg>
<svg style="left:255px;top:56px;" width="16" height="16" viewBox="0 0 16 16"><path d="M1.5 3.5q3-3 5 0v10q-2.5-3-5 0z" fill="#fff" stroke="#4a62a8"/><rect x="7.500" y="4.5" width="7" height="9" fill="#dfe8ff" stroke="#333"/><path d="M14.5 5v8.500h-6" stroke="#000" fill="none"/></svg>
<div style="left:277px;top:55px;width:1px;height:19px;background:#8f8f8f;"></div>
<div class="t" style="left:289px;top:56px;height:16px;line-height:16px;font-family:'Liberation Serif',serif;font-style:italic;font-weight:bold;font-size:13px;">f<span style="font-size:9px;margin-left:-1px;">x</span></div>
<div style="left:308px;top:55px;width:1px;height:19px;background:#8f8f8f;"></div>
<svg style="left:317px;top:56px;" width="16" height="16" viewBox="0 0 16 16"><path d="M5 1l4.500 9M11 1l-4.500 9" stroke="#8a8a8a" stroke-width="1.4" fill="none"/><circle cx="5" cy="12" r="2" fill="none" stroke="#2a5ac8" stroke-width="1.5"/><circle cx="11" cy="12" r="2" fill="none" stroke="#2a5ac8" stroke-width="1.5"/></svg>
<svg style="left:340px;top:56px;" width="16" height="16" viewBox="0 0 16 16"><path d="M1.5 1.5h5l2 2v6.500h-7z" fill="#fff" stroke="#4a62a8"/><path d="M3 5.500h4M3 7.500h4" stroke="#4a7ad8"/><path d="M6.500 5.500h5l2 2v7h-7z" fill="#fff" stroke="#4a62a8"/><path d="M8 9.500h4M8 11.500h4M8 13.500h4" stroke="#4a7ad8"/></svg>
<svg style="left:363px;top:56px;" width="16" height="16" viewBox="0 0 16 16"><rect x="1.500" y="3.500" width="10" height="11" fill="#d0d0d0" stroke="#b4b4b4"/><rect x="4" y="2" width="5" height="3" fill="#c0c0c0"/><rect x="7.500" y="8.500" width="7" height="6" fill="#e8e8e8" stroke="#b4b4b4"/><path d="M9 11.500h4" stroke="#c0c0c0"/></svg>
<div style="left:385px;top:55px;width:1px;height:19px;background:#8f8f8f;"></div>
<svg style="left:393px;top:56px;" width="16" height="16" viewBox="0 0 16 16"><path d="M4 6.500q6-4.500 8 0.500q1 4-4 7.500" fill="none" stroke="#2a5ac8" stroke-width="2.200"/><path d="M1.500 2.500l1.500 7l5-4z" fill="#2a5ac8"/></svg>
<svg style="left:417px;top:56px;" width="16" height="16" viewBox="0 0 16 16"><path d="M12 6.500q-6-4.500-8 0.500q-1 4 4 7.500" fill="none" stroke="#c4c4c4" stroke-width="2.200"/><path d="M14.500 2.500l-1.500 7l-5-4z" fill="#c4c4c4"/></svg>
<div style="left:439px;top:55px;width:1px;height:19px;background:#8f8f8f;"></div>
<svg style="left:448px;top:57px;" width="16" height="16" viewBox="0 0 16 16"><rect x="2.500" y="2.500" width="7" height="7" fill="none" stroke="#1a2a5a" stroke-width="1.300"/><rect x="6.500" y="6.500" width="7" height="7" fill="#fff" stroke="#1a2a5a" stroke-width="1.300"/><rect x="0" y="0" width="3" height="3" fill="#3a5ab8"/><rect x="12" y="0" width="3" height="3" fill="#3a5ab8"/><rect x="0" y="12" width="3" height="3" fill="#3a5ab8"/><rect x="12" y="12" width="3" height="3" fill="#3a5ab8"/></svg>
<svg style="left:471px;top:57px;" width="17" height="16" viewBox="0 0 17 16"><rect x="2.500" y="2.500" width="7" height="6" fill="none" stroke="#1a2a5a" stroke-width="1.300"/><rect x="6.500" y="7.500" width="8" height="6" fill="#fff" stroke="#1a2a5a" stroke-width="1.300"/><rect x="1" y="1" width="3" height="3" fill="#3a5ab8"/><rect x="8" y="1" width="3" height="3" fill="#3a5ab8"/><rect x="1" y="7" width="3" height="3" fill="#3a5ab8"/><rect x="5" y="6" width="3" height="3" fill="#3a5ab8"/><rect x="13" y="6" width="3" height="3" fill="#3a5ab8"/><rect x="5" y="12" width="3" height="3" fill="#3a5ab8"/><rect x="13" y="12" width="3" height="3" fill="#3a5ab8"/></svg>
<div style="left:493px;top:55px;width:1px;height:19px;background:#8f8f8f;"></div>
<div class="act" style="left:499px;top:53px;width:23px;height:22px;"></div>
<div class="act" style="left:522px;top:53px;width:23px;height:22px;"></div>
<svg style="left:502px;top:56px;" width="16" height="16" viewBox="0 0 16 16"><path d="M3 1v14M6.300 1v14M9.700 1v14M13 1v14M1 3h14M1 6.300h14M1 9.700h14M1 13h14" stroke="#333" stroke-width="1.300"/></svg>
<svg style="left:525px;top:56px;" width="16" height="16" viewBox="0 0 16 16"><path d="M4.500 0v16M11.500 0v16M0 4.500h16M0 11.500h16" stroke="#3a6ad8" stroke-width="1"/><rect x="5.500" y="4.500" width="6" height="6" fill="#dfe6f5" stroke="#555"/><path d="M12 5v6.500h-6" stroke="#000" fill="none"/><path d="M7 1h3l-1.500 1.500zM7 15h3l-1.500-1.500zM1 7v3l1.500-1.500zM15 7v3l-1.500-1.500z" fill="#1a2a5a"/></svg>
<svg style="left:548px;top:56px;" width="16" height="16" viewBox="0 0 16 16"><path d="M4.500 1v14M11.500 1v14M1 4.500h14M1 11.500h14" stroke="#3a6ad8" stroke-width="1"/><rect x="5.500" y="5.500" width="5" height="5" fill="#dfe6f5" stroke="#666"/><path d="M11 5.500v5.500h-5.500" stroke="#000" fill="none" stroke-width="1.400"/><path d="M6.500 0h3l-1.500 1.500zM6.500 16h3l-1.500-1.500zM0 6.500v3l1.500-1.500zM16 6.500v3l-1.500-1.500z" fill="#2a5ac8"/></svg>
<div style="left:574px;top:56px;width:47px;height:17px;background:#fff;"></div>
<div class="t" style="left:577px;top:56px;height:18px;line-height:18px;">130%</div>
<div style="left:609px;top:57px;width:11px;height:15px;background:#f0f0f0;"></div>
<svg style="left:612px;top:63px;" width="5" height="3" viewBox="0 0 5 3"><path d="M0 0h5L2.500 3z" fill="#000"/></svg>
<div style="left:13px;top:83px;width:91px;height:17px;background:#fff;"></div>
<div class="t" style="left:14px;top:83px;height:18px;line-height:18px;letter-spacing:0.05px;">Немає стилю</div>
<div style="left:92px;top:84px;width:11px;height:15px;background:#f0f0f0;"></div>
<svg style="left:95px;top:90px;" width="5" height="3" viewBox="0 0 5 3"><path d="M0 0h5L2.500 3z" fill="#000"/></svg>
<div style="left:111px;top:83px;width:143px;height:17px;background:#fff;"></div>
<div class="t" style="left:114px;top:83px;height:18px;line-height:18px;font-family:'Liberation Serif',serif;font-weight:bold;"><span style="font-size:10px;color:#777;position:relative;top:-3px;">T</span><span style="font-size:13px;margin-left:-3px;">T</span></div>
<div class="t" style="left:129px;top:83px;height:18px;line-height:18px;">Arial</div>
<div style="left:242px;top:84px;width:11px;height:15px;background:#f0f0f0;"></div>
<svg style="left:245px;top:90px;" width="5" height="3" viewBox="0 0 5 3"><path d="M0 0h5L2.500 3z" fill="#000"/></svg>
<div style="left:261px;top:83px;width:38px;height:17px;background:#fff;"></div>
<div class="t" style="left:264px;top:83px;height:18px;line-height:18px;">12</div>
<div style="left:287px;top:84px;width:11px;height:15px;background:#f0f0f0;"></div>
<svg style="left:290px;top:90px;" width="5" height="3" viewBox="0 0 5 3"><path d="M0 0h5L2.500 3z" fill="#000"/></svg>
<div class="t" style="left:311px;top:82px;height:17px;line-height:17px;font-family:'Liberation Serif',serif;font-weight:bold;font-size:14px;">B</div>
<div class="t" style="left:334px;top:82px;height:17px;line-height:17px;font-family:'Liberation Serif',serif;font-weight:bold;font-style:italic;font-size:14px;">I</div>
<div class="t" style="left:356px;top:82px;height:17px;line-height:17px;font-family:'Liberation Serif',serif;font-weight:bold;font-size:13px;text-decoration:underline;text-underline-offset:2px;">U</div>
<div style="left:376px;top:82px;width:1px;height:19px;background:#8f8f8f;"></div>
<div class="t" style="left:385px;top:82px;height:17px;line-height:17px;font-family:'Liberation Serif',serif;font-weight:bold;color:#24466e;"><span style="font-size:15px;">T</span><span style="font-size:11px;color:#5f86b8;margin-left:-3px;position:relative;top:2px;">T</span></div>
<div class="t" style="left:410px;top:81px;height:17px;line-height:17px;font-family:'Liberation Serif',serif;font-weight:bold;font-size:16px;color:#2c5aa0;">A</div>
<svg style="left:409px;top:96px;" width="15" height="3" viewBox="0 0 15 3"><rect x="0" y="0" width="3" height="3" fill="#2a5ad0"/><rect x="4" y="0" width="3" height="3" fill="#e02020"/><rect x="8" y="0" width="3" height="3" fill="#f0b000"/><rect x="12" y="0" width="3" height="3" fill="#20b020"/></svg>
<div style="left:431px;top:84px;width:10px;height:9px;background:#f4e84a;"></div>
<div class="t" style="left:431px;top:83px;height:12px;line-height:12px;font-size:10.500px;letter-spacing:-0.300px;">ab</div>
<svg style="left:438px;top:84px;" width="10" height="10" viewBox="0 0 10 10"><path d="M1 8l6-6 2 1.500-6 6-2.500 0.500z" fill="#fff" stroke="#4a62a8" stroke-width="0.900"/></svg>
<div style="left:432px;top:96px;width:15px;height:3px;background:#ffee00;"></div>
<div class="t" style="left:454px;top:82px;height:17px;line-height:17px;font-size:13px;transform:rotate(-40deg);">ab</div>
<div style="left:476px;top:82px;width:1px;height:19px;background:#8f8f8f;"></div>
<div class="act" style="left:482px;top:80px;width:23px;height:22px;"></div>
<svg style="left:485px;top:83px;" width="16" height="16" viewBox="0 0 16 16"><rect x="1" y="2.70" width="12" height="1.250" fill="#000"/><rect x="1" y="5.30" width="9" height="1.250" fill="#000"/><rect x="1" y="7.90" width="12" height="1.250" fill="#000"/><rect x="1" y="10.50" width="9" height="1.250" fill="#000"/><rect x="1" y="13.10" width="12" height="1.250" fill="#000"/></svg>
<svg style="left:508px;top:83px;" width="16" height="16" viewBox="0 0 16 16"><rect x="2.0" y="2.70" width="12" height="1.250" fill="#000"/><rect x="4.0" y="5.30" width="8" height="1.250" fill="#000"/><rect x="1.0" y="7.90" width="14" height="1.250" fill="#000"/><rect x="4.0" y="10.50" width="8" height="1.250" fill="#000"/><rect x="2.0" y="13.10" width="12" height="1.250" fill="#000"/></svg>
<svg style="left:531px;top:83px;" width="16" height="16" viewBox="0 0 16 16"><rect x="3" y="2.70" width="12" height="1.250" fill="#000"/><rect x="6" y="5.30" width="9" height="1.250" fill="#000"/><rect x="3" y="7.90" width="12" height="1.250" fill="#000"/><rect x="6" y="10.50" width="9" height="1.250" fill="#000"/><rect x="3" y="13.10" width="12" height="1.250" fill="#000"/></svg>
<svg style="left:554px;top:83px;" width="16" height="16" viewBox="0 0 16 16"><rect x="1.5" y="2.70" width="13" height="1.250" fill="#000"/><rect x="1.5" y="5.30" width="13" height="1.250" fill="#000"/><rect x="1.5" y="7.90" width="13" height="1.250" fill="#000"/><rect x="1.5" y="10.50" width="13" height="1.250" fill="#000"/><rect x="1.5" y="13.10" width="13" height="1.250" fill="#000"/></svg>
<div style="left:576px;top:82px;width:1px;height:19px;background:#8f8f8f;"></div>
<svg style="left:586px;top:83px;" width="16" height="16" viewBox="0 0 16 16"><rect x="1" y="2" width="1.150" height="13" fill="#000"/><rect x="3" y="2" width="1.150" height="8" fill="#000"/><rect x="5" y="2" width="1.150" height="13" fill="#000"/><rect x="7" y="2" width="1.150" height="8" fill="#000"/><rect x="9" y="2" width="1.150" height="13" fill="#000"/><rect x="11" y="2" width="1.150" height="8" fill="#000"/><rect x="13" y="2" width="1.150" height="13" fill="#000"/></svg>
<div class="act" style="left:605px;top:80px;width:23px;height:22px;"></div>
<svg style="left:609px;top:83px;" width="16" height="16" viewBox="0 0 16 16"><rect x="1" y="4.5" width="1.150" height="8" fill="#000"/><rect x="3" y="2.0" width="1.150" height="13" fill="#000"/><rect x="5" y="4.5" width="1.150" height="8" fill="#000"/><rect x="7" y="2.0" width="1.150" height="13" fill="#000"/><rect x="9" y="4.5" width="1.150" height="8" fill="#000"/><rect x="11" y="2.0" width="1.150" height="13" fill="#000"/><rect x="13" y="4.5" width="1.150" height="8" fill="#000"/></svg>
<svg style="left:632px;top:83px;" width="16" height="16" viewBox="0 0 16 16"><rect x="1" y="2" width="1.150" height="13" fill="#000"/><rect x="3" y="7" width="1.150" height="8" fill="#000"/><rect x="5" y="2" width="1.150" height="13" fill="#000"/><rect x="7" y="7" width="1.150" height="8" fill="#000"/><rect x="9" y="2" width="1.150" height="13" fill="#000"/><rect x="11" y="7" width="1.150" height="8" fill="#000"/><rect x="13" y="2" width="1.150" height="13" fill="#000"/></svg>
<div class="act" style="left:664px;top:80px;width:24px;height:22px;"></div>
<div class="act" style="left:687px;top:80px;width:24px;height:22px;"></div>
<div class="act" style="left:710px;top:80px;width:24px;height:22px;"></div>
<div class="act" style="left:733px;top:80px;width:23px;height:22px;"></div>
<svg style="left:669px;top:85px;" width="14" height="14" viewBox="0 0 14 14"><rect x="0" y="0" width="1" height="1" fill="#555"/><rect x="0" y="0" width="1" height="1" fill="#555"/><rect x="0" y="6" width="1" height="1" fill="#555"/><rect x="6" y="0" width="1" height="1" fill="#555"/><rect x="0" y="12" width="1" height="1" fill="#555"/><rect x="12" y="0" width="1" height="1" fill="#555"/><rect x="2" y="0" width="1" height="1" fill="#555"/><rect x="0" y="2" width="1" height="1" fill="#555"/><rect x="2" y="6" width="1" height="1" fill="#555"/><rect x="6" y="2" width="1" height="1" fill="#555"/><rect x="2" y="12" width="1" height="1" fill="#555"/><rect x="12" y="2" width="1" height="1" fill="#555"/><rect x="4" y="0" width="1" height="1" fill="#555"/><rect x="0" y="4" width="1" height="1" fill="#555"/><rect x="4" y="6" width="1" height="1" fill="#555"/><rect x="6" y="4" width="1" height="1" fill="#555"/><rect x="4" y="12" width="1" height="1" fill="#555"/><rect x="12" y="4" width="1" height="1" fill="#555"/><rect x="6" y="0" width="1" height="1" fill="#555"/><rect x="0" y="6" width="1" height="1" fill="#555"/><rect x="6" y="6" width="1" height="1" fill="#555"/><rect x="6" y="6" width="1" height="1" fill="#555"/><rect x="6" y="12" width="1" height="1" fill="#555"/><rect x="12" y="6" width="1" height="1" fill="#555"/><rect x="8" y="0" width="1" height="1" fill="#555"/><rect x="0" y="8" width="1" height="1" fill="#555"/><rect x="8" y="6" width="1" height="1" fill="#555"/><rect x="6" y="8" width="1" height="1" fill="#555"/><rect x="8" y="12" width="1" height="1" fill="#555"/><rect x="12" y="8" width="1" height="1" fill="#555"/><rect x="10" y="0" width="1" height="1" fill="#555"/><rect x="0" y="10" width="1" height="1" fill="#555"/><rect x="10" y="6" width="1" height="1" fill="#555"/><rect x="6" y="10" width="1" height="1" fill="#555"/><rect x="10" y="12" width="1" height="1" fill="#555"/><rect x="12" y="10" width="1" height="1" fill="#555"/><rect x="12" y="0" width="1" height="1" fill="#555"/><rect x="0" y="12" width="1" height="1" fill="#555"/><rect x="12" y="6" width="1" height="1" fill="#555"/><rect x="6" y="12" width="1" height="1" fill="#555"/><rect x="12" y="12" width="1" height="1" fill="#555"/><rect x="12" y="12" width="1" height="1" fill="#555"/><rect x="0" y="-0.300" width="13" height="1.500" fill="#111"/></svg>
<svg style="left:692px;top:85px;" width="14" height="14" viewBox="0 0 14 14"><rect x="0" y="0" width="1" height="1" fill="#555"/><rect x="0" y="0" width="1" height="1" fill="#555"/><rect x="0" y="6" width="1" height="1" fill="#555"/><rect x="6" y="0" width="1" height="1" fill="#555"/><rect x="0" y="12" width="1" height="1" fill="#555"/><rect x="12" y="0" width="1" height="1" fill="#555"/><rect x="2" y="0" width="1" height="1" fill="#555"/><rect x="0" y="2" width="1" height="1" fill="#555"/><rect x="2" y="6" width="1" height="1" fill="#555"/><rect x="6" y="2" width="1" height="1" fill="#555"/><rect x="2" y="12" width="1" height="1" fill="#555"/><rect x="12" y="2" width="1" height="1" fill="#555"/><rect x="4" y="0" width="1" height="1" fill="#555"/><rect x="0" y="4" width="1" height="1" fill="#555"/><rect x="4" y="6" width="1" height="1" fill="#555"/><rect x="6" y="4" width="1" height="1" fill="#555"/><rect x="4" y="12" width="1" height="1" fill="#555"/><rect x="12" y="4" width="1" height="1" fill="#555"/><rect x="6" y="0" width="1" height="1" fill="#555"/><rect x="0" y="6" width="1" height="1" fill="#555"/><rect x="6" y="6" width="1" height="1" fill="#555"/><rect x="6" y="6" width="1" height="1" fill="#555"/><rect x="6" y="12" width="1" height="1" fill="#555"/><rect x="12" y="6" width="1" height="1" fill="#555"/><rect x="8" y="0" width="1" height="1" fill="#555"/><rect x="0" y="8" width="1" height="1" fill="#555"/><rect x="8" y="6" width="1" height="1" fill="#555"/><rect x="6" y="8" width="1" height="1" fill="#555"/><rect x="8" y="12" width="1" height="1" fill="#555"/><rect x="12" y="8" width="1" height="1" fill="#555"/><rect x="10" y="0" width="1" height="1" fill="#555"/><rect x="0" y="10" width="1" height="1" fill="#555"/><rect x="10" y="6" width="1" height="1" fill="#555"/><rect x="6" y="10" width="1" height="1" fill="#555"/><rect x="10" y="12" width="1" height="1" fill="#555"/><rect x="12" y="10" width="1" height="1" fill="#555"/><rect x="12" y="0" width="1" height="1" fill="#555"/><rect x="0" y="12" width="1" height="1" fill="#555"/><rect x="12" y="6" width="1" height="1" fill="#555"/><rect x="6" y="12" width="1" height="1" fill="#555"/><rect x="12" y="12" width="1" height="1" fill="#555"/><rect x="12" y="12" width="1" height="1" fill="#555"/><rect x="0" y="11.800" width="13" height="1.500" fill="#111"/></svg>
<svg style="left:715px;top:85px;" width="14" height="14" viewBox="0 0 14 14"><rect x="0" y="0" width="1" height="1" fill="#555"/><rect x="0" y="0" width="1" height="1" fill="#555"/><rect x="0" y="6" width="1" height="1" fill="#555"/><rect x="6" y="0" width="1" height="1" fill="#555"/><rect x="0" y="12" width="1" height="1" fill="#555"/><rect x="12" y="0" width="1" height="1" fill="#555"/><rect x="2" y="0" width="1" height="1" fill="#555"/><rect x="0" y="2" width="1" height="1" fill="#555"/><rect x="2" y="6" width="1" height="1" fill="#555"/><rect x="6" y="2" width="1" height="1" fill="#555"/><rect x="2" y="12" width="1" height="1" fill="#555"/><rect x="12" y="2" width="1" height="1" fill="#555"/><rect x="4" y="0" width="1" height="1" fill="#555"/><rect x="0" y="4" width="1" height="1" fill="#555"/><rect x="4" y="6" width="1" height="1" fill="#555"/><rect x="6" y="4" width="1" height="1" fill="#555"/><rect x="4" y="12" width="1" height="1" fill="#555"/><rect x="12" y="4" width="1" height="1" fill="#555"/><rect x="6" y="0" width="1" height="1" fill="#555"/><rect x="0" y="6" width="1" height="1" fill="#555"/><rect x="6" y="6" width="1" height="1" fill="#555"/><rect x="6" y="6" width="1" height="1" fill="#555"/><rect x="6" y="12" width="1" height="1" fill="#555"/><rect x="12" y="6" width="1" height="1" fill="#555"/><rect x="8" y="0" width="1" height="1" fill="#555"/><rect x="0" y="8" width="1" height="1" fill="#555"/><rect x="8" y="6" width="1" height="1" fill="#555"/><rect x="6" y="8" width="1" height="1" fill="#555"/><rect x="8" y="12" width="1" height="1" fill="#555"/><rect x="12" y="8" width="1" height="1" fill="#555"/><rect x="10" y="0" width="1" height="1" fill="#555"/><rect x="0" y="10" width="1" height="1" fill="#555"/><rect x="10" y="6" width="1" height="1" fill="#555"/><rect x="6" y="10" width="1" height="1" fill="#555"/><rect x="10" y="12" width="1" height="1" fill="#555"/><rect x="12" y="10" width="1" height="1" fill="#555"/><rect x="12" y="0" width="1" height="1" fill="#555"/><rect x="0" y="12" width="1" height="1" fill="#555"/><rect x="12" y="6" width="1" height="1" fill="#555"/><rect x="6" y="12" width="1" height="1" fill="#555"/><rect x="12" y="12" width="1" height="1" fill="#555"/><rect x="12" y="12" width="1" height="1" fill="#555"/><rect x="-0.300" y="0" width="1.500" height="13" fill="#111"/></svg>
<svg style="left:738px;top:85px;" width="14" height="14" viewBox="0 0 14 14"><rect x="0" y="0" width="1" height="1" fill="#555"/><rect x="0" y="0" width="1" height="1" fill="#555"/><rect x="0" y="6" width="1" height="1" fill="#555"/><rect x="6" y="0" width="1" height="1" fill="#555"/><rect x="0" y="12" width="1" height="1" fill="#555"/><rect x="12" y="0" width="1" height="1" fill="#555"/><rect x="2" y="0" width="1" height="1" fill="#555"/><rect x="0" y="2" width="1" height="1" fill="#555"/><rect x="2" y="6" width="1" height="1" fill="#555"/><rect x="6" y="2" width="1" height="1" fill="#555"/><rect x="2" y="12" width="1" height="1" fill="#555"/><rect x="12" y="2" width="1" height="1" fill="#555"/><rect x="4" y="0" width="1" height="1" fill="#555"/><rect x="0" y="4" width="1" height="1" fill="#555"/><rect x="4" y="6" width="1" height="1" fill="#555"/><rect x="6" y="4" width="1" height="1" fill="#555"/><rect x="4" y="12" width="1" height="1" fill="#555"/><rect x="12" y="4" width="1" height="1" fill="#555"/><rect x="6" y="0" width="1" height="1" fill="#555"/><rect x="0" y="6" width="1" height="1" fill="#555"/><rect x="6" y="6" width="1" height="1" fill="#555"/><rect x="6" y="6" width="1" height="1" fill="#555"/><rect x="6" y="12" width="1" height="1" fill="#555"/><rect x="12" y="6" width="1" height="1" fill="#555"/><rect x="8" y="0" width="1" height="1" fill="#555"/><rect x="0" y="8" width="1" height="1" fill="#555"/><rect x="8" y="6" width="1" height="1" fill="#555"/><rect x="6" y="8" width="1" height="1" fill="#555"/><rect x="8" y="12" width="1" height="1" fill="#555"/><rect x="12" y="8" width="1" height="1" fill="#555"/><rect x="10" y="0" width="1" height="1" fill="#555"/><rect x="0" y="10" width="1" height="1" fill="#555"/><rect x="10" y="6" width="1" height="1" fill="#555"/><rect x="6" y="10" width="1" height="1" fill="#555"/><rect x="10" y="12" width="1" height="1" fill="#555"/><rect x="12" y="10" width="1" height="1" fill="#555"/><rect x="12" y="0" width="1" height="1" fill="#555"/><rect x="0" y="12" width="1" height="1" fill="#555"/><rect x="12" y="6" width="1" height="1" fill="#555"/><rect x="6" y="12" width="1" height="1" fill="#555"/><rect x="12" y="12" width="1" height="1" fill="#555"/><rect x="12" y="12" width="1" height="1" fill="#555"/><rect x="11.800" y="0" width="1.500" height="13" fill="#111"/></svg>
<div style="left:758px;top:82px;width:1px;height:19px;background:#8f8f8f;"></div>
<svg style="left:768px;top:85px;" width="14" height="14" viewBox="0 0 14 14"><rect x="2" y="6" width="1" height="1" fill="#555"/><rect x="6" y="2" width="1" height="1" fill="#555"/><rect x="4" y="6" width="1" height="1" fill="#555"/><rect x="6" y="4" width="1" height="1" fill="#555"/><rect x="6" y="6" width="1" height="1" fill="#555"/><rect x="6" y="6" width="1" height="1" fill="#555"/><rect x="8" y="6" width="1" height="1" fill="#555"/><rect x="6" y="8" width="1" height="1" fill="#555"/><rect x="10" y="6" width="1" height="1" fill="#555"/><rect x="6" y="10" width="1" height="1" fill="#555"/><rect x="0.600" y="0.600" width="11.800" height="11.800" fill="none" stroke="#111" stroke-width="1.400"/></svg>
<svg style="left:791px;top:85px;" width="14" height="14" viewBox="0 0 14 14"><rect x="0" y="0" width="1" height="1" fill="#aaa"/><rect x="0" y="0" width="1" height="1" fill="#aaa"/><rect x="0" y="6" width="1" height="1" fill="#aaa"/><rect x="6" y="0" width="1" height="1" fill="#aaa"/><rect x="0" y="12" width="1" height="1" fill="#aaa"/><rect x="12" y="0" width="1" height="1" fill="#aaa"/><rect x="2" y="0" width="1" height="1" fill="#aaa"/><rect x="0" y="2" width="1" height="1" fill="#aaa"/><rect x="2" y="6" width="1" height="1" fill="#aaa"/><rect x="6" y="2" width="1" height="1" fill="#aaa"/><rect x="2" y="12" width="1" height="1" fill="#aaa"/><rect x="12" y="2" width="1" height="1" fill="#aaa"/><rect x="4" y="0" width="1" height="1" fill="#aaa"/><rect x="0" y="4" width="1" height="1" fill="#aaa"/><rect x="4" y="6" width="1" height="1" fill="#aaa"/><rect x="6" y="4" width="1" height="1" fill="#aaa"/><rect x="4" y="12" width="1" height="1" fill="#aaa"/><rect x="12" y="4" width="1" height="1" fill="#aaa"/><rect x="6" y="0" width="1" height="1" fill="#aaa"/><rect x="0" y="6" width="1" height="1" fill="#aaa"/><rect x="6" y="6" width="1" height="1" fill="#aaa"/><rect x="6" y="6" width="1" height="1" fill="#aaa"/><rect x="6" y="12" width="1" height="1" fill="#aaa"/><rect x="12" y="6" width="1" height="1" fill="#aaa"/><rect x="8" y="0" width="1" height="1" fill="#aaa"/><rect x="0" y="8" width="1" height="1" fill="#aaa"/><rect x="8" y="6" width="1" height="1" fill="#aaa"/><rect x="6" y="8" width="1" height="1" fill="#aaa"/><rect x="8" y="12" width="1" height="1" fill="#aaa"/><rect x="12" y="8" width="1" height="1" fill="#aaa"/><rect x="10" y="0" width="1" height="1" fill="#aaa"/><rect x="0" y="10" width="1" height="1" fill="#aaa"/><rect x="10" y="6" width="1" height="1" fill="#aaa"/><rect x="6" y="10" width="1" height="1" fill="#aaa"/><rect x="10" y="12" width="1" height="1" fill="#aaa"/><rect x="12" y="10" width="1" height="1" fill="#aaa"/><rect x="12" y="0" width="1" height="1" fill="#aaa"/><rect x="0" y="12" width="1" height="1" fill="#aaa"/><rect x="12" y="6" width="1" height="1" fill="#aaa"/><rect x="6" y="12" width="1" height="1" fill="#aaa"/><rect x="12" y="12" width="1" height="1" fill="#aaa"/><rect x="12" y="12" width="1" height="1" fill="#aaa"/></svg>
<svg style="left:812px;top:83px;" width="16" height="16" viewBox="0 0 16 16"><rect x="3" y="3" width="10" height="9" fill="#fff"/><path d="M4 13.200h10.200v-8" stroke="#222" stroke-width="1.600" fill="none"/></svg>
<div style="left:835px;top:82px;width:1px;height:19px;background:#8f8f8f;"></div>
<svg style="left:845px;top:83px;" width="16" height="13" viewBox="0 0 16 13"><path d="M1.500 7.500L7 2L12.500 7.500L7 12.500z" fill="#f4f8ff" stroke="#3a5a9a" stroke-width="1"/><path d="M4 7.500L7 4.500L10 7.500z" fill="#c8d8f4"/><path d="M6.500 0.500q-1.500 2 0 5" stroke="#7a8ab0" stroke-width="1.200" fill="none"/><path d="M12.500 6.500q3 1.500 2 6q-2.500-2.500-3-5z" fill="#3a6ad0"/></svg>
<svg style="left:845px;top:96px;" width="15" height="3" viewBox="0 0 15 3"><rect x="0" y="0" width="3" height="3" fill="#2a5ad0"/><rect x="4" y="0" width="3" height="3" fill="#e02020"/><rect x="8" y="0" width="3" height="3" fill="#f0b000"/><rect x="12" y="0" width="3" height="3" fill="#20b020"/></svg>
<svg style="left:868px;top:83px;" width="16" height="13" viewBox="0 0 16 13"><path d="M3.500 9.500L10.500 2.500Q12.500 1.500 13.500 3.500L6.500 11.500z" fill="#dfe8fa" stroke="#7084b8" stroke-width="0.900"/><path d="M3.500 9.500L6.500 11.500L2 12.500z" fill="#f0d060" stroke="#a08830" stroke-width="0.600"/><path d="M11 2.500L13.200 4.200" stroke="#5a70a8" stroke-width="1.200"/></svg>
<svg style="left:868px;top:96px;" width="15" height="3" viewBox="0 0 15 3"><rect x="0" y="0" width="3" height="3" fill="#2a5ad0"/><rect x="4" y="0" width="3" height="3" fill="#e02020"/><rect x="8" y="0" width="3" height="3" fill="#f0b000"/><rect x="12" y="0" width="3" height="3" fill="#20b020"/></svg>
<svg style="left:891px;top:83px;" width="16" height="16" viewBox="0 0 16 16"><path d="M0 3.500h15" stroke="#111" stroke-width="1.300"/><path d="M0 6.500h15" stroke="#111" stroke-dasharray="1 1"/><path d="M0 9.500h15" stroke="#111" stroke-dasharray="3 1"/><path d="M0 12.500h15" stroke="#111" stroke-dasharray="1 2 3 2"/></svg>
<div style="left:916px;top:83px;width:38px;height:17px;background:#fff;"></div>
<div class="t" style="left:918px;top:83px;height:18px;line-height:18px;">0,1</div>
<div style="left:942px;top:84px;width:11px;height:15px;background:#f0f0f0;"></div>
<svg style="left:945px;top:90px;" width="5" height="3" viewBox="0 0 5 3"><path d="M0 0h5L2.500 3z" fill="#000"/></svg>
<svg style="left:6px;top:109px;" width="16" height="18" viewBox="0 0 16 18"><path d="M3.500 0.500v13l3-3 2.500 5.500 2-1-2.500-5.500h4z" fill="#222" stroke="#222" stroke-width="0.600"/></svg>
<svg style="left:5px;top:134px;" width="18" height="16" viewBox="0 0 18 16"><path d="M6.500 14.500L4.500 11L1 8Q0.500 6.500 2.500 6.500L5.500 9L3.800 3.500Q4.300 1.800 5.800 2.500L7.500 6.500L7 1.500Q8 0 9.300 1L10 6.500L10.800 2Q12 0.800 13 2.200L12.500 7.500L14.500 4.500Q16 4 16.500 5.500L14.500 10.500L12.500 14.500z" fill="#fff" stroke="#2c4a8c" stroke-width="1" stroke-linejoin="round"/><path d="M7 13.500h5.500l1-2" stroke="#b8c8ec" stroke-width="1.500" fill="none"/></svg>
<svg style="left:5px;top:156px;" width="19" height="17" viewBox="0 0 19 17"><circle cx="7.500" cy="7" r="5.500" fill="#e8f2ff" stroke="#8c8c8c" stroke-width="1.500"/><path d="M4.500 5.500q1.500-2.500 4.500-2" stroke="#fff" stroke-width="1.500" fill="none"/><path d="M12 11l4.500 4" stroke="#c89a2a" stroke-width="3" stroke-linecap="round"/></svg>
<div class="t" style="left:8px;top:177px;height:18px;line-height:18px;font-family:'Liberation Serif',serif;font-weight:bold;font-size:15px;color:#1f4a80;">T</div>
<svg style="left:16px;top:185px;" width="5" height="10" viewBox="0 0 5 10"><path d="M0.500 0.500h4M0.500 9.500h4M2.500 0.500v9" stroke="#000" fill="none"/></svg>
<svg style="left:5px;top:202px;" width="18" height="15" viewBox="0 0 18 15"><path d="M11 6.500L15 1.500Q16.500 0.800 17.300 2.200L13.500 7.500z" fill="#5a58b0" stroke="#2e2c78" stroke-width="0.800"/><path d="M9 4.500L14 8.500L12.500 10.500L7.500 6.500z" fill="#b8b8c0" stroke="#666" stroke-width="0.700"/><path d="M7.500 6L12.500 10.500L8.500 14.500L1 9.500z" fill="#ecd98a" stroke="#8a7430" stroke-width="0.900"/><path d="M2.500 9.500L8.500 13.500" stroke="#c0a850" stroke-width="1.500"/></svg>
<svg style="left:5px;top:224px;" width="18" height="17" viewBox="0 0 18 17"><rect x="0.500" y="6.500" width="6" height="4" fill="#b8c8e4" stroke="#3a57a6"/><path d="M7 8.500h3" stroke="#000"/><path d="M9 6.500l2.500 2-2.500 2z" fill="#000"/><path d="M17 1.500h-5v4.500" stroke="#3a57a6" fill="none"/><rect x="12.500" y="2" width="4.500" height="3" fill="#fff"/><rect x="12" y="11.500" width="5.500" height="4" fill="#fff" stroke="#3a57a6"/><path d="M12 5.500h5.500" stroke="#9ab0dc"/></svg>
<div class="t" style="left:8px;top:247px;height:18px;line-height:18px;font-family:'Liberation Serif',serif;font-weight:bold;font-size:17px;">A</div>
<div class="act" style="left:3px;top:268px;width:24px;height:23px;"></div>
<svg style="left:8px;top:272px;" width="14" height="14" viewBox="0 0 14 14"><rect x="0.500" y="0.500" width="13" height="13" fill="#fff" stroke="#3a57a6"/><rect x="1" y="1" width="12" height="12" fill="#eef4ff"/><circle cx="9.500" cy="4" r="1.600" fill="#f08a3a"/><path d="M1 11l4-5 3.500 4 1.500-1.500 3 3.500v1h-12z" fill="#3aa04a"/><path d="M1 13l5-4 7 4z" fill="#2a5ac8"/></svg>
<svg style="left:6px;top:294px;" width="16" height="17" viewBox="0 0 16 17"><rect x="0.500" y="0.500" width="9" height="11" fill="#fff" stroke="#3a57a6"/><path d="M2 3h5M2 5h5" stroke="#6a8ad0"/><rect x="4.500" y="4.500" width="10" height="11" fill="#fff" stroke="#3a57a6"/><rect x="6" y="11" width="2" height="3" fill="#2a5ad0"/><rect x="9" y="9" width="2" height="5" fill="#e0a020"/><rect x="12" y="7" width="2" height="7" fill="#20a040"/><rect x="6" y="6" width="2" height="2" fill="#e04040"/></svg>
<div class="t" style="left:9.500px;top:316px;height:18px;line-height:18px;font-weight:bold;font-size:14.500px;">Σ</div>
<svg style="left:6px;top:340px;" width="16" height="16" viewBox="0 0 16 16"><path d="M1.500 6.500l6-4 6 4v8h-12z" fill="#fff" stroke="#2a3a8a"/><path d="M3 6l4.500-3.500 4.500 3.500z" fill="#e8c020"/><path d="M4 8v5M6.500 8v5M9 8v5M11.500 8v5" stroke="#000" stroke-width="1.300"/><circle cx="7.500" cy="1.500" r="1.200" fill="none" stroke="#555"/></svg>
<svg style="left:6px;top:363px;" width="16" height="16" viewBox="0 0 16 16"><rect x="1.500" y="1.500" width="12" height="12" fill="#fff" stroke="#3a57a6"/><path d="M4 7.500l2.500 3 4.500-6" fill="none" stroke="#20a020" stroke-width="2"/></svg>
<svg style="left:7px;top:389px;" width="15" height="11" viewBox="0 0 15 11"><defs><linearGradient id="gr1" x1="0" y1="0" x2="0" y2="1"><stop offset="0" stop-color="#f4f8ff"/><stop offset="0.500" stop-color="#c4d2ec"/><stop offset="1" stop-color="#6a8ac8"/></linearGradient></defs><rect x="0.500" y="0.500" width="14" height="10" fill="url(#gr1)" stroke="#3a57a6"/></svg>
<svg style="left:6px;top:409px;" width="16" height="16" viewBox="0 0 16 16"><rect x="1.500" y="1.500" width="13" height="13" fill="#fff" stroke="#3a57a6"/><path d="M8 4.500h5M8 6.500h5M3 9.500h10M3 11.500h10" stroke="#8a9ac8"/><text x="2.500" y="8" font-size="7" font-weight="bold" font-family="Liberation Sans" fill="#e02020">A</text></svg>
<svg style="left:6px;top:432px;" width="16" height="16" viewBox="0 0 16 16"><path d="M1.500 3v11.500h13" fill="none" stroke="#2a3a6a"/><rect x="3" y="6" width="3" height="8" fill="#3a8ad8" stroke="#1a4a8a" stroke-width="0.600"/><rect x="7" y="2" width="3" height="12" fill="#e8c020" stroke="#8a6a10" stroke-width="0.600"/><rect x="11" y="5" width="3" height="9" fill="#e04a2a" stroke="#8a2a10" stroke-width="0.600"/></svg>
<div class="t" style="left:6px;top:454px;height:18px;line-height:18px;font-weight:bold;font-style:italic;font-size:15px;color:#5a4ac0;">A</div>
<svg style="left:15px;top:456px;" width="9" height="14" viewBox="0 0 9 14"><ellipse cx="4.500" cy="3.500" rx="4" ry="3" fill="#f0c040" stroke="#a08020" stroke-width="0.700"/><ellipse cx="5" cy="10" rx="3.500" ry="3" fill="#c8ccd8" stroke="#8a8ea0" stroke-width="0.700"/></svg>
<svg style="left:0px;top:0px;" width="1562" height="930" viewBox="0 0 1562 930"><path d="M167 242.300L53 274.700" stroke="#fb0d0d" stroke-width="2.800" stroke-linecap="round" fill="none"/><path d="M38.700 278.800L51.800 270.400L54.200 279.200z" fill="#fb0d0d"/></svg>
<div class="t" style="left:174.5px;top:228px;height:24px;line-height:24px;color:#fb0d0d;font-size:19.5px;font-family:'DejaVu Sans',sans-serif;transform:scaleX(0.86);transform-origin:0 0;">1</div>
</body></html>
